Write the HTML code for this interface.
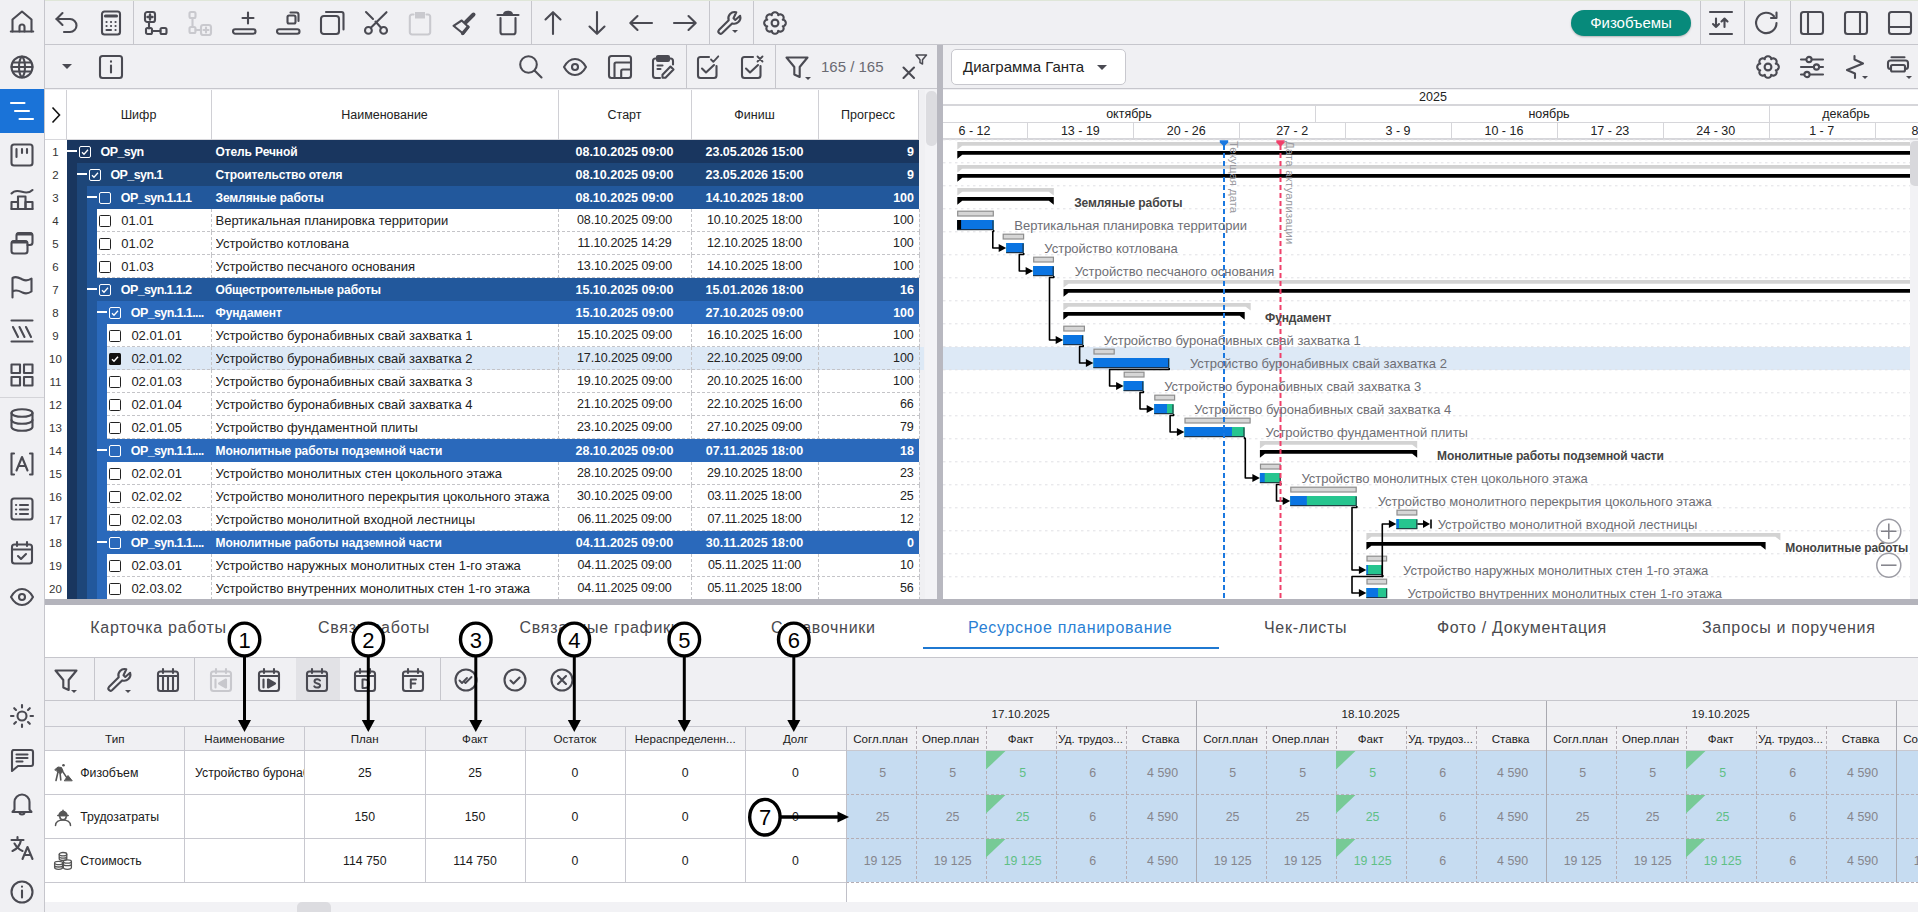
<!DOCTYPE html><html><head><meta charset="utf-8"><style>
html,body{margin:0;padding:0;}
body{width:1918px;height:912px;overflow:hidden;position:relative;background:#f0f0f3;font-family:"Liberation Sans",sans-serif;color:#222;}
div{box-sizing:border-box;}
</style></head><body>
<div style="position:absolute;left:0px;top:0px;width:1918px;height:1px;background:#dfe6d8"></div>
<div style="position:absolute;left:0px;top:0px;width:44px;height:912px;background:#f0f0f3"></div>
<div style="position:absolute;left:44px;top:0px;width:1px;height:912px;background:#c6c6cc"></div>
<div style="position:absolute;left:0px;top:89px;width:44px;height:44px;background:#1a73d8"></div>
<div style="position:absolute;left:0px;top:397px;width:44px;height:1px;background:#d4d4d8"></div>
<svg style="position:absolute;left:10.0px;top:10.0px;overflow:visible" width="24" height="24" viewBox="0 0 24 24" fill="none" stroke="#4a4a52" stroke-width="2.1" stroke-linecap="round" stroke-linejoin="round" color="#4a4a52"><path d="M0.8 21.5h22.4"/><path d="M2.5 21.5V9.5L12 1.5l9.5 8v12"/><path d="M9.5 21.5v-4.5a2.5 2.5 0 0 1 5 0v4.5"/></svg>
<svg style="position:absolute;left:10.0px;top:54.5px;overflow:visible" width="24" height="24" viewBox="0 0 24 24" fill="none" stroke="#4a4a52" stroke-width="2.1" stroke-linecap="round" stroke-linejoin="round" color="#4a4a52"><circle cx="12" cy="12" r="10.5"/><path d="M1.5 12h21M3 7.5h18M3 16.5h18"/><path d="M12 1.5c-4 4-4 17 0 21M12 1.5c4 4 4 17 0 21"/></svg>
<svg style="position:absolute;left:10.0px;top:99.0px;overflow:visible" width="24" height="24" viewBox="0 0 24 24" fill="none" stroke="#ffffff" stroke-width="2.1" stroke-linecap="round" stroke-linejoin="round" color="#ffffff"><path d="M1 4h13.5M5 12h14M9.5 20h13.5"/></svg>
<svg style="position:absolute;left:10.0px;top:143.0px;overflow:visible" width="24" height="24" viewBox="0 0 24 24" fill="none" stroke="#4a4a52" stroke-width="2.1" stroke-linecap="round" stroke-linejoin="round" color="#4a4a52"><rect x="1.5" y="1.5" width="21" height="21" rx="2.5"/><path d="M6.5 6v8M12 6v4M17 6v4"/></svg>
<svg style="position:absolute;left:10.0px;top:187.0px;overflow:visible" width="24" height="24" viewBox="0 0 24 24" fill="none" stroke="#4a4a52" stroke-width="2.1" stroke-linecap="round" stroke-linejoin="round" color="#4a4a52"><path d="M1.5 22h21"/><rect x="1.5" y="15" width="6.5" height="7"/><rect x="8" y="9.5" width="7.5" height="12.5"/><rect x="15.5" y="15" width="7" height="7"/><path d="M1.5 6.5C4 3.5 8 3.5 12 4.8S19 6.5 22.5 3"/></svg>
<svg style="position:absolute;left:10.0px;top:231.0px;overflow:visible" width="24" height="24" viewBox="0 0 24 24" fill="none" stroke="#4a4a52" stroke-width="2.1" stroke-linecap="round" stroke-linejoin="round" color="#4a4a52"><rect x="1.5" y="10" width="16" height="12.5" rx="2.5"/><path d="M6.5 10V4.5a2.5 2.5 0 0 1 2.5-2.5h11a2.5 2.5 0 0 1 2.5 2.5v7a2.5 2.5 0 0 1-2.5 2.5h-2.5"/><path d="M7.5 3h14M2.5 11h14" stroke-width="3"/></svg>
<svg style="position:absolute;left:10.0px;top:275.0px;overflow:visible" width="24" height="24" viewBox="0 0 24 24" fill="none" stroke="#4a4a52" stroke-width="2.1" stroke-linecap="round" stroke-linejoin="round" color="#4a4a52"><path d="M2.5 22.5V3c4-2.5 7 0 10 1.5s6 1 9-1v13c-3 2-6 2.5-9 1S6.5 14 2.5 16.5"/></svg>
<svg style="position:absolute;left:10.0px;top:319.0px;overflow:visible" width="24" height="24" viewBox="0 0 24 24" fill="none" stroke="#4a4a52" stroke-width="2.1" stroke-linecap="round" stroke-linejoin="round" color="#4a4a52"><path d="M1.5 1.5h21M1.5 22.5h21M3 8l5 10M9.5 8l5 10M16 8l5 10"/></svg>
<svg style="position:absolute;left:10.0px;top:363.0px;overflow:visible" width="24" height="24" viewBox="0 0 24 24" fill="none" stroke="#4a4a52" stroke-width="2.1" stroke-linecap="round" stroke-linejoin="round" color="#4a4a52"><rect x="1.5" y="1.5" width="8.5" height="8.5"/><rect x="14" y="1.5" width="8.5" height="8.5"/><rect x="1.5" y="14" width="8.5" height="8.5"/><rect x="14" y="14" width="8.5" height="8.5"/></svg>
<svg style="position:absolute;left:10.0px;top:408.0px;overflow:visible" width="24" height="24" viewBox="0 0 24 24" fill="none" stroke="#4a4a52" stroke-width="2.1" stroke-linecap="round" stroke-linejoin="round" color="#4a4a52"><ellipse cx="12" cy="5" rx="10.5" ry="3.8"/><path d="M1.5 5v14c0 2.1 4.7 3.8 10.5 3.8s10.5-1.7 10.5-3.8V5"/><path d="M1.5 12c0 2.1 4.7 3.8 10.5 3.8s10.5-1.7 10.5-3.8"/></svg>
<svg style="position:absolute;left:10.0px;top:452.0px;overflow:visible" width="24" height="24" viewBox="0 0 24 24" fill="none" stroke="#4a4a52" stroke-width="2.1" stroke-linecap="round" stroke-linejoin="round" color="#4a4a52"><path d="M4 1.5H1.5v21H4M20 1.5h2.5v21H20"/><path d="M6.5 18.5L12 5l5.5 13.5M8.3 14h7.4"/></svg>
<svg style="position:absolute;left:10.0px;top:496.5px;overflow:visible" width="24" height="24" viewBox="0 0 24 24" fill="none" stroke="#4a4a52" stroke-width="2.1" stroke-linecap="round" stroke-linejoin="round" color="#4a4a52"><rect x="1.5" y="1.5" width="21" height="21" rx="2.5"/><path d="M6 8h.2M6 12.5h.2M6 17h.2M10 8h8M10 12.5h8M10 17h8"/></svg>
<svg style="position:absolute;left:10.0px;top:540.5px;overflow:visible" width="24" height="24" viewBox="0 0 24 24" fill="none" stroke="#4a4a52" stroke-width="2.1" stroke-linecap="round" stroke-linejoin="round" color="#4a4a52"><rect x="2" y="3.5" width="20" height="19" rx="2.5"/><path d="M2 8.5h20M7 1v4M17 1v4"/><path d="M8 15l3 3 5-5"/></svg>
<svg style="position:absolute;left:10.0px;top:584.5px;overflow:visible" width="24" height="24" viewBox="0 0 24 24" fill="none" stroke="#4a4a52" stroke-width="2.1" stroke-linecap="round" stroke-linejoin="round" color="#4a4a52"><path d="M1 12c3-5.5 7-8 11-8s8 2.5 11 8c-3 5.5-7 8-11 8s-8-2.5-11-8z"/><circle cx="12" cy="12" r="3"/></svg>
<svg style="position:absolute;left:10.0px;top:703.5px;overflow:visible" width="24" height="24" viewBox="0 0 24 24" fill="none" stroke="#4a4a52" stroke-width="2.1" stroke-linecap="round" stroke-linejoin="round" color="#4a4a52"><circle cx="12" cy="12" r="4.5"/><path d="M12 1v2.5M12 20.5V23M1 12h2.5M20.5 12H23M4.2 4.2l1.8 1.8M18 18l1.8 1.8M4.2 19.8L6 18M18 6l1.8-1.8"/></svg>
<svg style="position:absolute;left:10.0px;top:748.0px;overflow:visible" width="24" height="24" viewBox="0 0 24 24" fill="none" stroke="#4a4a52" stroke-width="2.1" stroke-linecap="round" stroke-linejoin="round" color="#4a4a52"><path d="M3 2h18a2 2 0 0 1 2 2v12a2 2 0 0 1-2 2H8l-6 5V4a2 2 0 0 1 2-2z"/><path d="M6.5 6.5h11M6.5 10h11M6.5 13.5h6"/></svg>
<svg style="position:absolute;left:10.0px;top:792.0px;overflow:visible" width="24" height="24" viewBox="0 0 24 24" fill="none" stroke="#4a4a52" stroke-width="2.1" stroke-linecap="round" stroke-linejoin="round" color="#4a4a52"><path d="M4.5 17.5V10a7.5 7.5 0 0 1 15 0v7.5l2 2.5H2.5z"/><path d="M9.5 20a2.5 2.5 0 0 0 5 0"/></svg>
<svg style="position:absolute;left:10.0px;top:836.0px;overflow:visible" width="24" height="24" viewBox="0 0 24 24" fill="none" stroke="#4a4a52" stroke-width="2.1" stroke-linecap="round" stroke-linejoin="round" color="#4a4a52"><path d="M1.5 4h12M7.5 1v3M11 4c-1 6-4 9-8.5 11M4.5 7.5c2 3.5 4.5 6 8 7.5"/><path d="M12.5 23l5-12 5 12M14.2 19h6.6"/></svg>
<svg style="position:absolute;left:10.0px;top:880.0px;overflow:visible" width="24" height="24" viewBox="0 0 24 24" fill="none" stroke="#4a4a52" stroke-width="2.1" stroke-linecap="round" stroke-linejoin="round" color="#4a4a52"><circle cx="12" cy="12" r="10.5"/><path d="M12 10.5v7M12 6.5v.3"/></svg>
<div style="position:absolute;left:45px;top:44px;width:1873px;height:1px;background:#c6c6cc"></div>
<div style="position:absolute;left:45px;top:88.3px;width:1873px;height:1.2px;background:#c6c6cc"></div>
<div style="position:absolute;left:133px;top:1px;width:1px;height:43px;background:#c6c6cc"></div>
<div style="position:absolute;left:531px;top:1px;width:1px;height:43px;background:#c6c6cc"></div>
<div style="position:absolute;left:708.5px;top:1px;width:1px;height:43px;background:#c6c6cc"></div>
<div style="position:absolute;left:753px;top:1px;width:1px;height:43px;background:#c6c6cc"></div>
<div style="position:absolute;left:1699.5px;top:1px;width:1px;height:43px;background:#c6c6cc"></div>
<div style="position:absolute;left:1744.4px;top:1px;width:1px;height:43px;background:#c6c6cc"></div>
<div style="position:absolute;left:1789.5px;top:1px;width:1px;height:43px;background:#c6c6cc"></div>
<svg style="position:absolute;left:55.0px;top:11.0px;overflow:visible" width="24" height="24" viewBox="0 0 24 24" fill="none" stroke="#4a4a52" stroke-width="2.1" stroke-linecap="round" stroke-linejoin="round" color="#4a4a52"><path d="M7.5 2L1.5 8l6 6"/><path d="M1.5 8H15a6.5 6.5 0 0 1 0 13H9"/></svg>
<svg style="position:absolute;left:99.0px;top:11.0px;overflow:visible" width="24" height="24" viewBox="0 0 24 24" fill="none" stroke="#4a4a52" stroke-width="2.1" stroke-linecap="round" stroke-linejoin="round" color="#4a4a52"><rect x="3" y="0.5" width="18" height="23" rx="2.5"/><path d="M6.5 5h11" stroke-width="3.2"/><path d="M7.5 11h.1M12 11h.1M16.5 11h.1M7.5 15h.1M12 15h.1M16.5 15h.1M7.5 19h4.5M16.5 19h.1"/></svg>
<svg style="position:absolute;left:144.0px;top:11.0px;overflow:visible" width="24" height="24" viewBox="0 0 24 24" fill="none" stroke="#4a4a52" stroke-width="2.1" stroke-linecap="round" stroke-linejoin="round" color="#4a4a52"><rect x="1" y="1" width="10" height="10" rx="2.3"/><path d="M6 3.5v5M3.5 6h5" stroke-width="2.4"/><path d="M5 11v6.5"/><rect x="2" y="17" width="6" height="6" rx="1.5"/><rect x="16.5" y="17" width="6" height="6" rx="1.5"/><path d="M8 20h8.5"/></svg>
<svg style="position:absolute;left:188.0px;top:11.0px;overflow:visible" width="24" height="24" viewBox="0 0 24 24" fill="none" stroke="#c9c9ce" stroke-width="2.1" stroke-linecap="round" stroke-linejoin="round" color="#c9c9ce"><rect x="1.5" y="1" width="6" height="6" rx="1.5"/><path d="M4.5 7v9"/><rect x="1.5" y="16" width="6" height="6" rx="1.5"/><path d="M7.5 19h5.5"/><rect x="13" y="14" width="10" height="10" rx="2.3"/><path d="M18 16.5v5M15.5 19h5"/></svg>
<svg style="position:absolute;left:232.0px;top:11.0px;overflow:visible" width="24" height="24" viewBox="0 0 24 24" fill="none" stroke="#4a4a52" stroke-width="2.1" stroke-linecap="round" stroke-linejoin="round" color="#4a4a52"><rect x="1" y="18.2" width="22.5" height="4.5" rx="2.2"/><path d="M16 1.5v11M10.5 7h11"/></svg>
<svg style="position:absolute;left:276.0px;top:11.0px;overflow:visible" width="24" height="24" viewBox="0 0 24 24" fill="none" stroke="#4a4a52" stroke-width="2.1" stroke-linecap="round" stroke-linejoin="round" color="#4a4a52"><rect x="1" y="18.2" width="22.5" height="4.5" rx="2.2"/><rect x="11.5" y="4.5" width="8" height="8" rx="1.5"/><path d="M14.5 1.5h6a2 2 0 0 1 2 2v6.5"/></svg>
<svg style="position:absolute;left:320.0px;top:11.0px;overflow:visible" width="24" height="24" viewBox="0 0 24 24" fill="none" stroke="#4a4a52" stroke-width="2.1" stroke-linecap="round" stroke-linejoin="round" color="#4a4a52"><rect x="1" y="5" width="18" height="18" rx="2.8"/><path d="M6 1h15.5a2 2 0 0 1 2 2v15.5"/></svg>
<svg style="position:absolute;left:364.0px;top:11.0px;overflow:visible" width="24" height="24" viewBox="0 0 24 24" fill="none" stroke="#4a4a52" stroke-width="2.1" stroke-linecap="round" stroke-linejoin="round" color="#4a4a52"><circle cx="4.4" cy="19.4" r="3.4"/><circle cx="19.6" cy="19.4" r="3.4"/><path d="M2 1l7 7M11.5 10.5l5.8 6.5M22.5 1.2L6.8 16.8"/></svg>
<svg style="position:absolute;left:408.0px;top:11.0px;overflow:visible" width="24" height="24" viewBox="0 0 24 24" fill="none" stroke="#c9c9ce" stroke-width="2.1" stroke-linecap="round" stroke-linejoin="round" color="#c9c9ce"><path d="M5.5 3.5H4a2.2 2.2 0 0 0-2.2 2.2v15.6A2.2 2.2 0 0 0 4 23.5h16a2.2 2.2 0 0 0 2.2-2.2V5.7A2.2 2.2 0 0 0 20 3.5h-1.5"/><rect x="7" y="1" width="10" height="6.5" fill="#c9c9ce" stroke="none"/></svg>
<svg style="position:absolute;left:452.0px;top:11.0px;overflow:visible" width="24" height="24" viewBox="0 0 24 24" fill="none" stroke="#4a4a52" stroke-width="2.1" stroke-linecap="round" stroke-linejoin="round" color="#4a4a52"><path d="M1.5 14.8l8.2-5.3 6.8 6.5-5.2 6.8z"/><path d="M10.5 22.5l5.5-6.5" stroke-width="3.2"/><path d="M14 11l7.5-7.5" stroke-width="4"/></svg>
<svg style="position:absolute;left:496.0px;top:11.0px;overflow:visible" width="24" height="24" viewBox="0 0 24 24" fill="none" stroke="#4a4a52" stroke-width="2.1" stroke-linecap="round" stroke-linejoin="round" color="#4a4a52"><path d="M1.5 4h21"/><path d="M8 3.5c0-2 1.5-2.8 4-2.8s4 .8 4 2.8z" fill="#4a4a52"/><path d="M4.5 7v14a2.3 2.3 0 0 0 2.3 2.3h10.4a2.3 2.3 0 0 0 2.3-2.3V7"/></svg>
<svg style="position:absolute;left:541.0px;top:11.0px;overflow:visible" width="24" height="24" viewBox="0 0 24 24" fill="none" stroke="#4a4a52" stroke-width="2.1" stroke-linecap="round" stroke-linejoin="round" color="#4a4a52"><path d="M12 1.5v21.5M4.5 8.5L12 1.2l7.5 7.3"/></svg>
<svg style="position:absolute;left:585.0px;top:11.0px;overflow:visible" width="24" height="24" viewBox="0 0 24 24" fill="none" stroke="#4a4a52" stroke-width="2.1" stroke-linecap="round" stroke-linejoin="round" color="#4a4a52"><path d="M12 1v21.5M4.5 15.5l7.5 7.3 7.5-7.3"/></svg>
<svg style="position:absolute;left:629.0px;top:11.0px;overflow:visible" width="24" height="24" viewBox="0 0 24 24" fill="none" stroke="#4a4a52" stroke-width="2.1" stroke-linecap="round" stroke-linejoin="round" color="#4a4a52"><path d="M1.5 12H23M8.5 5L1.3 12l7.2 7"/></svg>
<svg style="position:absolute;left:673.0px;top:11.0px;overflow:visible" width="24" height="24" viewBox="0 0 24 24" fill="none" stroke="#4a4a52" stroke-width="2.1" stroke-linecap="round" stroke-linejoin="round" color="#4a4a52"><path d="M1 12h21.5M15.5 5l7.2 7-7.2 7"/></svg>
<svg style="position:absolute;left:718.0px;top:11.0px;overflow:visible" width="24" height="24" viewBox="0 0 24 24" fill="none" stroke="#4a4a52" stroke-width="2.1" stroke-linecap="round" stroke-linejoin="round" color="#4a4a52"><path d="M15.5 7.2l1.8 1.8 4.8-4.2a6.2 6.2 0 0 1-8 7.6L4 22.2a2.2 2.2 0 0 1-3.1-3.1L10.7 9.3a6.2 6.2 0 0 1 7.6-8z"/></svg>
<svg style="position:absolute;left:763.0px;top:11.0px;overflow:visible" width="24" height="24" viewBox="0 0 24 24" fill="none" stroke="#4a4a52" stroke-width="2.1" stroke-linecap="round" stroke-linejoin="round" color="#4a4a52"><polygon points="22.80,12.00 22.77,12.42 22.70,12.84 22.57,13.25 22.38,13.64 22.15,14.02 21.86,14.37 21.52,14.69 21.12,14.96 20.62,15.18 19.76,15.21 20.34,15.85 20.54,16.35 20.63,16.83 20.65,17.30 20.61,17.75 20.51,18.18 20.36,18.59 20.16,18.97 19.92,19.32 19.64,19.64 19.32,19.92 18.97,20.16 18.59,20.36 18.18,20.51 17.75,20.61 17.30,20.65 16.83,20.63 16.35,20.54 15.85,20.34 15.21,19.76 15.18,20.62 14.96,21.12 14.69,21.52 14.37,21.86 14.02,22.15 13.64,22.38 13.25,22.57 12.84,22.70 12.42,22.77 12.00,22.80 11.58,22.77 11.16,22.70 10.75,22.57 10.36,22.38 9.98,22.15 9.63,21.86 9.31,21.52 9.04,21.12 8.82,20.62 8.79,19.76 8.15,20.34 7.65,20.54 7.17,20.63 6.70,20.65 6.25,20.61 5.82,20.51 5.41,20.36 5.03,20.16 4.68,19.92 4.36,19.64 4.08,19.32 3.84,18.97 3.64,18.59 3.49,18.18 3.39,17.75 3.35,17.30 3.37,16.83 3.46,16.35 3.66,15.85 4.24,15.21 3.38,15.18 2.88,14.96 2.48,14.69 2.14,14.37 1.85,14.02 1.62,13.64 1.43,13.25 1.30,12.84 1.23,12.42 1.20,12.00 1.23,11.58 1.30,11.16 1.43,10.75 1.62,10.36 1.85,9.98 2.14,9.63 2.48,9.31 2.88,9.04 3.38,8.82 4.24,8.79 3.66,8.15 3.46,7.65 3.37,7.17 3.35,6.70 3.39,6.25 3.49,5.82 3.64,5.41 3.84,5.03 4.08,4.68 4.36,4.36 4.68,4.08 5.03,3.84 5.41,3.64 5.82,3.49 6.25,3.39 6.70,3.35 7.17,3.37 7.65,3.46 8.15,3.66 8.79,4.24 8.82,3.38 9.04,2.88 9.31,2.48 9.63,2.14 9.98,1.85 10.36,1.62 10.75,1.43 11.16,1.30 11.58,1.23 12.00,1.20 12.42,1.23 12.84,1.30 13.25,1.43 13.64,1.62 14.02,1.85 14.37,2.14 14.69,2.48 14.96,2.88 15.18,3.38 15.21,4.24 15.85,3.66 16.35,3.46 16.83,3.37 17.30,3.35 17.75,3.39 18.18,3.49 18.59,3.64 18.97,3.84 19.32,4.08 19.64,4.36 19.92,4.68 20.16,5.03 20.36,5.41 20.51,5.82 20.61,6.25 20.65,6.70 20.63,7.17 20.54,7.65 20.34,8.15 19.76,8.79 20.62,8.82 21.12,9.04 21.52,9.31 21.86,9.63 22.15,9.98 22.38,10.36 22.57,10.75 22.70,11.16 22.77,11.58"/><circle cx="12" cy="12" r="3.4"/></svg>
<div style="position:absolute;left:732px;top:30px;width:0;height:0;border-left:3.0px solid transparent;border-right:3.0px solid transparent;border-top:3.0px solid #4a4a52"></div>
<div style="position:absolute;left:1571px;top:10px;width:120px;height:26px;border-radius:13px;background:#078a7b;box-shadow:0 1px 2px rgba(0,0,0,.25);color:#fff;font-size:15px;line-height:26px;text-align:center">Физобъемы</div>
<svg style="position:absolute;left:1709.0px;top:11.0px;overflow:visible" width="24" height="24" viewBox="0 0 24 24" fill="none" stroke="#4a4a52" stroke-width="2.1" stroke-linecap="round" stroke-linejoin="round" color="#4a4a52"><path d="M1 1h22M1 23h22"/><path d="M7 7.5v8.5M4 13l3 3 3-3M15.5 16V7.5M12.5 10.5l3-3 3 3"/></svg>
<svg style="position:absolute;left:1755.0px;top:11.0px;overflow:visible" width="24" height="24" viewBox="0 0 24 24" fill="none" stroke="#4a4a52" stroke-width="2.1" stroke-linecap="round" stroke-linejoin="round" color="#4a4a52"><path d="M21.5 12A10.2 10.2 0 1 1 19 5.2"/><path d="M21.5 1.5v5.5H16"/></svg>
<svg style="position:absolute;left:1800.0px;top:11.0px;overflow:visible" width="24" height="24" viewBox="0 0 24 24" fill="none" stroke="#4a4a52" stroke-width="2.1" stroke-linecap="round" stroke-linejoin="round" color="#4a4a52"><rect x="1" y="1" width="22" height="22" rx="2.5"/><path d="M8 1v22"/></svg>
<svg style="position:absolute;left:1844.0px;top:11.0px;overflow:visible" width="24" height="24" viewBox="0 0 24 24" fill="none" stroke="#4a4a52" stroke-width="2.1" stroke-linecap="round" stroke-linejoin="round" color="#4a4a52"><rect x="1" y="1" width="22" height="22" rx="2.5"/><path d="M16 1v22"/></svg>
<svg style="position:absolute;left:1888.0px;top:11.0px;overflow:visible" width="24" height="24" viewBox="0 0 24 24" fill="none" stroke="#4a4a52" stroke-width="2.1" stroke-linecap="round" stroke-linejoin="round" color="#4a4a52"><rect x="1" y="1" width="22" height="22" rx="2.5"/><path d="M1 16h22"/></svg>
<div style="position:absolute;left:62px;top:64px;width:0;height:0;border-left:5.0px solid transparent;border-right:5.0px solid transparent;border-top:5.0px solid #4a4a52"></div>
<svg style="position:absolute;left:99.0px;top:55.0px;overflow:visible" width="24" height="24" viewBox="0 0 24 24" fill="none" stroke="#4a4a52" stroke-width="2.1" stroke-linecap="round" stroke-linejoin="round" color="#4a4a52"><rect x="1" y="1" width="22" height="22" rx="2.5"/><path d="M12 10.5v7M12 6.3v.4"/></svg>
<div style="position:absolute;left:686px;top:45px;width:1px;height:44px;background:#c6c6cc"></div>
<div style="position:absolute;left:775px;top:45px;width:1px;height:44px;background:#c6c6cc"></div>
<svg style="position:absolute;left:519.0px;top:55.0px;overflow:visible" width="24" height="24" viewBox="0 0 24 24" fill="none" stroke="#4a4a52" stroke-width="2.1" stroke-linecap="round" stroke-linejoin="round" color="#4a4a52"><circle cx="9.5" cy="9.5" r="8.3"/><path d="M15.5 15.5l7 7"/></svg>
<svg style="position:absolute;left:563.0px;top:55.0px;overflow:visible" width="24" height="24" viewBox="0 0 24 24" fill="none" stroke="#4a4a52" stroke-width="2.1" stroke-linecap="round" stroke-linejoin="round" color="#4a4a52"><path d="M1 12c3-5.5 7-8 11-8s8 2.5 11 8c-3 5.5-7 8-11 8s-8-2.5-11-8z"/><circle cx="12" cy="12" r="3"/></svg>
<svg style="position:absolute;left:608.0px;top:55.0px;overflow:visible" width="24" height="24" viewBox="0 0 24 24" fill="none" stroke="#4a4a52" stroke-width="2.1" stroke-linecap="round" stroke-linejoin="round" color="#4a4a52"><rect x="1" y="1" width="22" height="22" rx="2.5"/><path d="M6.5 23V9a1.5 1.5 0 0 1 1.5-1.5h15M13.2 23v-7a1.5 1.5 0 0 1 1.5-1.5H23"/></svg>
<svg style="position:absolute;left:651.0px;top:55.0px;overflow:visible" width="24" height="24" viewBox="0 0 24 24" fill="none" stroke="#4a4a52" stroke-width="2.1" stroke-linecap="round" stroke-linejoin="round" color="#4a4a52"><path d="M6 3.5H4.5a2.5 2.5 0 0 0-2.5 2.5v14.5a2.5 2.5 0 0 0 2.5 2.5H9M18 3.5h1.5a2.5 2.5 0 0 1 2.5 2.5v3.5"/><rect x="6" y="1" width="12" height="5" rx="1" fill="#4a4a52"/><path d="M6.5 10.5h5M6.5 14h3"/><path d="M19.5 11.5l3 3-8 8.3h-3v-3z"/></svg>
<svg style="position:absolute;left:696.0px;top:55.0px;overflow:visible" width="24" height="24" viewBox="0 0 24 24" fill="none" stroke="#4a4a52" stroke-width="2.1" stroke-linecap="round" stroke-linejoin="round" color="#4a4a52"><path d="M13 2H4.5A2.5 2.5 0 0 0 2 4.5v16A2.5 2.5 0 0 0 4.5 23h13.5a2.5 2.5 0 0 0 2.5-2.5V11"/><path d="M6 13.5l4 4 8-7.5"/><path d="M15 4.5l2.3 2.3 5-5.5" stroke-width="1.8"/></svg>
<svg style="position:absolute;left:740.0px;top:55.0px;overflow:visible" width="24" height="24" viewBox="0 0 24 24" fill="none" stroke="#4a4a52" stroke-width="2.1" stroke-linecap="round" stroke-linejoin="round" color="#4a4a52"><path d="M13 2H4.5A2.5 2.5 0 0 0 2 4.5v16A2.5 2.5 0 0 0 4.5 23h13.5a2.5 2.5 0 0 0 2.5-2.5V11"/><path d="M6 13.5l4 4 8-7.5"/><path d="M17.5 1.5l5 5M22.5 1.5l-5 5" stroke-width="1.8"/></svg>
<svg style="position:absolute;left:785.0px;top:55.0px;overflow:visible" width="24" height="24" viewBox="0 0 24 24" fill="none" stroke="#4a4a52" stroke-width="2.1" stroke-linecap="round" stroke-linejoin="round" color="#4a4a52"><path d="M1.5 2.5h21l-7.8 9.5v10l-5.4-2.5V12z"/></svg>
<div style="position:absolute;left:805px;top:77px;width:0;height:0;border-left:3.0px solid transparent;border-right:3.0px solid transparent;border-top:3.0px solid #4a4a52"></div>
<div style="position:absolute;left:821px;top:58px;white-space:nowrap;font-size:15px;color:#6a6a72;line-height:18px">165 / 165</div>
<svg style="position:absolute;left:0;top:0;overflow:visible" width="1" height="1" fill="none" stroke="#4a4a52" stroke-width="2.1" stroke-linecap="round" stroke-linejoin="round"><path d="M903.5 67.5l10.5 10.5M914 67.5l-10.5 10.5"/><path d="M916 55h10.5l-4 4.8v4.2l-2.5-1.3v-2.9z" stroke-width="1.5"/></svg>
<div style="position:absolute;left:937px;top:45px;width:6px;height:555px;background:#b8b8c0"></div>
<div style="position:absolute;left:951px;top:49px;width:175px;height:36px;border:1px solid #c8c8ce;border-radius:5px;background:#fff"></div>
<div style="position:absolute;left:963px;top:58px;white-space:nowrap;font-size:15px;color:#222;line-height:18px">Диаграмма Ганта</div>
<div style="position:absolute;left:1097px;top:64.5px;width:0;height:0;border-left:5.0px solid transparent;border-right:5.0px solid transparent;border-top:5.0px solid #4a4a52"></div>
<svg style="position:absolute;left:1756.0px;top:55.0px;overflow:visible" width="24" height="24" viewBox="0 0 24 24" fill="none" stroke="#4a4a52" stroke-width="2.1" stroke-linecap="round" stroke-linejoin="round" color="#4a4a52"><polygon points="22.80,12.00 22.77,12.42 22.70,12.84 22.57,13.25 22.38,13.64 22.15,14.02 21.86,14.37 21.52,14.69 21.12,14.96 20.62,15.18 19.76,15.21 20.34,15.85 20.54,16.35 20.63,16.83 20.65,17.30 20.61,17.75 20.51,18.18 20.36,18.59 20.16,18.97 19.92,19.32 19.64,19.64 19.32,19.92 18.97,20.16 18.59,20.36 18.18,20.51 17.75,20.61 17.30,20.65 16.83,20.63 16.35,20.54 15.85,20.34 15.21,19.76 15.18,20.62 14.96,21.12 14.69,21.52 14.37,21.86 14.02,22.15 13.64,22.38 13.25,22.57 12.84,22.70 12.42,22.77 12.00,22.80 11.58,22.77 11.16,22.70 10.75,22.57 10.36,22.38 9.98,22.15 9.63,21.86 9.31,21.52 9.04,21.12 8.82,20.62 8.79,19.76 8.15,20.34 7.65,20.54 7.17,20.63 6.70,20.65 6.25,20.61 5.82,20.51 5.41,20.36 5.03,20.16 4.68,19.92 4.36,19.64 4.08,19.32 3.84,18.97 3.64,18.59 3.49,18.18 3.39,17.75 3.35,17.30 3.37,16.83 3.46,16.35 3.66,15.85 4.24,15.21 3.38,15.18 2.88,14.96 2.48,14.69 2.14,14.37 1.85,14.02 1.62,13.64 1.43,13.25 1.30,12.84 1.23,12.42 1.20,12.00 1.23,11.58 1.30,11.16 1.43,10.75 1.62,10.36 1.85,9.98 2.14,9.63 2.48,9.31 2.88,9.04 3.38,8.82 4.24,8.79 3.66,8.15 3.46,7.65 3.37,7.17 3.35,6.70 3.39,6.25 3.49,5.82 3.64,5.41 3.84,5.03 4.08,4.68 4.36,4.36 4.68,4.08 5.03,3.84 5.41,3.64 5.82,3.49 6.25,3.39 6.70,3.35 7.17,3.37 7.65,3.46 8.15,3.66 8.79,4.24 8.82,3.38 9.04,2.88 9.31,2.48 9.63,2.14 9.98,1.85 10.36,1.62 10.75,1.43 11.16,1.30 11.58,1.23 12.00,1.20 12.42,1.23 12.84,1.30 13.25,1.43 13.64,1.62 14.02,1.85 14.37,2.14 14.69,2.48 14.96,2.88 15.18,3.38 15.21,4.24 15.85,3.66 16.35,3.46 16.83,3.37 17.30,3.35 17.75,3.39 18.18,3.49 18.59,3.64 18.97,3.84 19.32,4.08 19.64,4.36 19.92,4.68 20.16,5.03 20.36,5.41 20.51,5.82 20.61,6.25 20.65,6.70 20.63,7.17 20.54,7.65 20.34,8.15 19.76,8.79 20.62,8.82 21.12,9.04 21.52,9.31 21.86,9.63 22.15,9.98 22.38,10.36 22.57,10.75 22.70,11.16 22.77,11.58"/><circle cx="12" cy="12" r="3.4"/></svg>
<svg style="position:absolute;left:1800.0px;top:55.0px;overflow:visible" width="24" height="24" viewBox="0 0 24 24" fill="none" stroke="#4a4a52" stroke-width="2.1" stroke-linecap="round" stroke-linejoin="round" color="#4a4a52"><path d="M1 4.5h22M1 12h22M1 19.5h22"/><circle cx="9" cy="4.5" r="2.6" fill="#f0f0f3"/><circle cx="16.5" cy="12" r="2.6" fill="#f0f0f3"/><circle cx="7" cy="19.5" r="2.6" fill="#f0f0f3"/></svg>
<svg style="position:absolute;left:1842.5px;top:55.0px;overflow:visible" width="24" height="24" viewBox="0 0 24 24" fill="none" stroke="#4a4a52" stroke-width="2.1" stroke-linecap="round" stroke-linejoin="round" color="#4a4a52"><path d="M11.5 1v3.5l8.5 4-16 6.5 8 3.5v4.5"/></svg>
<svg style="position:absolute;left:1886.0px;top:55.0px;overflow:visible" width="24" height="24" viewBox="0 0 24 24" fill="none" stroke="#4a4a52" stroke-width="2.1" stroke-linecap="round" stroke-linejoin="round" color="#4a4a52"><path d="M5.5 2.3h13"/><rect x="2" y="5.5" width="20" height="8.5" rx="2.5"/><rect x="5" y="10" width="14" height="6.5" rx="1.5" fill="#f0f0f3"/></svg>
<div style="position:absolute;left:1861.5px;top:75.5px;width:0;height:0;border-left:3.5px solid transparent;border-right:3.5px solid transparent;border-top:3.5px solid #4a4a52"></div>
<div style="position:absolute;left:1905.5px;top:75.5px;width:0;height:0;border-left:3.5px solid transparent;border-right:3.5px solid transparent;border-top:3.5px solid #4a4a52"></div>
<div style="position:absolute;left:45px;top:89.5px;width:874px;height:50.5px;background:#fff"></div>
<div style="position:absolute;left:925px;top:90px;width:12px;height:510px;background:#f3f3f6"></div>
<div style="position:absolute;left:925.5px;top:91px;width:11px;height:55px;border-radius:5px;background:#dcdce0"></div>
<div style="position:absolute;left:45px;top:139px;width:874px;height:1px;background:#d8d8dc"></div>
<div style="position:absolute;left:66px;top:89.5px;width:1px;height:50.5px;background:#d0d0d5"></div>
<div style="position:absolute;left:211px;top:89.5px;width:1px;height:50.5px;background:#d0d0d5"></div>
<div style="position:absolute;left:558px;top:89.5px;width:1px;height:50.5px;background:#d0d0d5"></div>
<div style="position:absolute;left:691px;top:89.5px;width:1px;height:50.5px;background:#d0d0d5"></div>
<div style="position:absolute;left:818px;top:89.5px;width:1px;height:50.5px;background:#d0d0d5"></div>
<div style="position:absolute;left:918px;top:89.5px;width:1px;height:50.5px;background:#d0d0d5"></div>
<svg style="position:absolute;left:49px;top:105px" width="14" height="20" viewBox="0 0 14 20" fill="none" stroke="#111" stroke-width="1.6"><path d="M3.5 2.5l7 7.5-7 7.5"/></svg>
<div style="position:absolute;left:66px;top:90px;width:145px;white-space:nowrap;font-size:12.5px;color:#222;text-align:center;line-height:50px">Шифр</div>
<div style="position:absolute;left:211px;top:90px;width:347px;white-space:nowrap;font-size:12.5px;color:#222;text-align:center;line-height:50px">Наименование</div>
<div style="position:absolute;left:558px;top:90px;width:133px;white-space:nowrap;font-size:12.5px;color:#222;text-align:center;line-height:50px">Старт</div>
<div style="position:absolute;left:691px;top:90px;width:127px;white-space:nowrap;font-size:12.5px;color:#222;text-align:center;line-height:50px">Финиш</div>
<div style="position:absolute;left:818px;top:90px;width:100px;white-space:nowrap;font-size:12.5px;color:#222;text-align:center;line-height:50px">Прогресс</div>
<div style="position:absolute;left:45px;top:140px;width:874px;height:460px;background:#fff"></div>
<div style="position:absolute;left:45px;top:141px;width:21px;white-space:nowrap;font-size:11.5px;color:#333;text-align:center;line-height:23px">1</div>
<div style="position:absolute;left:66.6px;top:140px;width:852.1999999999999px;height:23px;background:#19365f"></div>
<div style="position:absolute;left:67.1px;top:149.8px;width:9.5px;height:1.8px;background:#fff"></div>
<div style="position:absolute;left:78.6px;top:145.5px;width:12px;height:12px;border:1.5px solid #fff;border-radius:2px"></div>
<svg style="position:absolute;left:78.6px;top:145.5px" width="12" height="12" viewBox="0 0 12 12" fill="none" stroke="#fff" stroke-width="1.3"><path d="M3 6.2l2 2 4-4.4"/></svg>
<div style="position:absolute;left:100.6px;top:140.5px;white-space:nowrap;font-size:12.5px;font-weight:bold;color:#fff;line-height:23px;letter-spacing:-0.6px">OP_syn</div>
<div style="position:absolute;left:215.5px;top:140.5px;white-space:nowrap;font-size:12.5px;font-weight:bold;color:#fff;line-height:23px;font-size:12px;letter-spacing:-0.1px">Отель Речной</div>
<div style="position:absolute;left:558px;top:140.5px;width:133px;white-space:nowrap;font-size:12.5px;font-weight:bold;color:#fff;line-height:23px;text-align:center">08.10.2025 09:00</div>
<div style="position:absolute;left:691px;top:140.5px;width:127px;white-space:nowrap;font-size:12.5px;font-weight:bold;color:#fff;line-height:23px;text-align:center">23.05.2026 15:00</div>
<div style="position:absolute;left:818px;top:140.5px;width:96px;white-space:nowrap;font-size:12.5px;font-weight:bold;color:#fff;line-height:23px;text-align:right">9</div>
<div style="position:absolute;left:45px;top:164px;width:21px;white-space:nowrap;font-size:11.5px;color:#333;text-align:center;line-height:23px">2</div>
<div style="position:absolute;left:66.6px;top:163px;width:10.200000000000006px;height:23px;background:#19365f"></div>
<div style="position:absolute;left:76.5px;top:163px;width:842.3px;height:23px;background:#1d4679"></div>
<div style="position:absolute;left:77.0px;top:172.8px;width:9.5px;height:1.8px;background:#fff"></div>
<div style="position:absolute;left:88.5px;top:168.5px;width:12px;height:12px;border:1.5px solid #fff;border-radius:2px"></div>
<svg style="position:absolute;left:88.5px;top:168.5px" width="12" height="12" viewBox="0 0 12 12" fill="none" stroke="#fff" stroke-width="1.3"><path d="M3 6.2l2 2 4-4.4"/></svg>
<div style="position:absolute;left:110.5px;top:163.5px;white-space:nowrap;font-size:12.5px;font-weight:bold;color:#fff;line-height:23px;letter-spacing:-0.6px">OP_syn.1</div>
<div style="position:absolute;left:215.5px;top:163.5px;white-space:nowrap;font-size:12.5px;font-weight:bold;color:#fff;line-height:23px;font-size:12px;letter-spacing:-0.1px">Строительство отеля</div>
<div style="position:absolute;left:558px;top:163.5px;width:133px;white-space:nowrap;font-size:12.5px;font-weight:bold;color:#fff;line-height:23px;text-align:center">08.10.2025 09:00</div>
<div style="position:absolute;left:691px;top:163.5px;width:127px;white-space:nowrap;font-size:12.5px;font-weight:bold;color:#fff;line-height:23px;text-align:center">23.05.2026 15:00</div>
<div style="position:absolute;left:818px;top:163.5px;width:96px;white-space:nowrap;font-size:12.5px;font-weight:bold;color:#fff;line-height:23px;text-align:right">9</div>
<div style="position:absolute;left:45px;top:187px;width:21px;white-space:nowrap;font-size:11.5px;color:#333;text-align:center;line-height:23px">3</div>
<div style="position:absolute;left:66.6px;top:186px;width:10.200000000000006px;height:23px;background:#19365f"></div>
<div style="position:absolute;left:76.5px;top:186px;width:10.599999999999998px;height:23px;background:#1d4679"></div>
<div style="position:absolute;left:86.8px;top:186px;width:832.0px;height:23px;background:#22589c"></div>
<div style="position:absolute;left:87.3px;top:195.8px;width:9.5px;height:1.8px;background:#fff"></div>
<div style="position:absolute;left:98.8px;top:191.5px;width:12px;height:12px;border:1.5px solid #fff;border-radius:2px"></div>
<div style="position:absolute;left:120.8px;top:186.5px;white-space:nowrap;font-size:12.5px;font-weight:bold;color:#fff;line-height:23px;letter-spacing:-0.6px">OP_syn.1.1.1</div>
<div style="position:absolute;left:215.5px;top:186.5px;white-space:nowrap;font-size:12.5px;font-weight:bold;color:#fff;line-height:23px;font-size:12px;letter-spacing:-0.1px">Земляные работы</div>
<div style="position:absolute;left:558px;top:186.5px;width:133px;white-space:nowrap;font-size:12.5px;font-weight:bold;color:#fff;line-height:23px;text-align:center">08.10.2025 09:00</div>
<div style="position:absolute;left:691px;top:186.5px;width:127px;white-space:nowrap;font-size:12.5px;font-weight:bold;color:#fff;line-height:23px;text-align:center">14.10.2025 18:00</div>
<div style="position:absolute;left:818px;top:186.5px;width:96px;white-space:nowrap;font-size:12.5px;font-weight:bold;color:#fff;line-height:23px;text-align:right">100</div>
<div style="position:absolute;left:45px;top:210px;width:21px;white-space:nowrap;font-size:11.5px;color:#333;text-align:center;line-height:23px">4</div>
<div style="position:absolute;left:66.6px;top:209px;width:10.200000000000006px;height:23px;background:#19365f"></div>
<div style="position:absolute;left:76.5px;top:209px;width:10.599999999999998px;height:23px;background:#1d4679"></div>
<div style="position:absolute;left:86.8px;top:209px;width:10.3px;height:23px;background:#22589c"></div>
<div style="position:absolute;left:96.8px;top:209px;width:822.0px;height:23px;background:#fff"></div>
<div style="position:absolute;left:96.8px;top:231px;width:822.0px;height:1px;background:repeating-linear-gradient(90deg,#c4c4c8 0 3px,transparent 3px 5px)"></div>
<div style="position:absolute;left:211px;top:209px;width:1px;height:23px;background:repeating-linear-gradient(180deg,#c4c4c8 0 3px,transparent 3px 5px)"></div>
<div style="position:absolute;left:558px;top:209px;width:1px;height:23px;background:repeating-linear-gradient(180deg,#c4c4c8 0 3px,transparent 3px 5px)"></div>
<div style="position:absolute;left:691px;top:209px;width:1px;height:23px;background:repeating-linear-gradient(180deg,#c4c4c8 0 3px,transparent 3px 5px)"></div>
<div style="position:absolute;left:818px;top:209px;width:1px;height:23px;background:repeating-linear-gradient(180deg,#c4c4c8 0 3px,transparent 3px 5px)"></div>
<div style="position:absolute;left:918.5px;top:209px;width:1px;height:23px;background:repeating-linear-gradient(180deg,#c4c4c8 0 3px,transparent 3px 5px)"></div>
<div style="position:absolute;left:98.8px;top:214.5px;width:12px;height:12px;border:1.3px solid #222;border-radius:1.5px;background:#fff"></div>
<div style="position:absolute;left:121.3px;top:208.5px;white-space:nowrap;font-size:13px;color:#222;line-height:23px">01.01</div>
<div style="position:absolute;left:215.5px;top:208.5px;width:341px;white-space:nowrap;font-size:13px;color:#222;line-height:23px;overflow:hidden">Вертикальная планировка территории</div>
<div style="position:absolute;left:558px;top:208.5px;width:133px;white-space:nowrap;font-size:12.5px;color:#222;line-height:23px;letter-spacing:-0.15px;text-align:center">08.10.2025 09:00</div>
<div style="position:absolute;left:691px;top:208.5px;width:127px;white-space:nowrap;font-size:12.5px;color:#222;line-height:23px;letter-spacing:-0.15px;text-align:center">10.10.2025 18:00</div>
<div style="position:absolute;left:818px;top:208.5px;width:95.5px;white-space:nowrap;font-size:12.5px;color:#222;line-height:23px;letter-spacing:-0.15px;text-align:right">100</div>
<div style="position:absolute;left:45px;top:233px;width:21px;white-space:nowrap;font-size:11.5px;color:#333;text-align:center;line-height:23px">5</div>
<div style="position:absolute;left:66.6px;top:232px;width:10.200000000000006px;height:23px;background:#19365f"></div>
<div style="position:absolute;left:76.5px;top:232px;width:10.599999999999998px;height:23px;background:#1d4679"></div>
<div style="position:absolute;left:86.8px;top:232px;width:10.3px;height:23px;background:#22589c"></div>
<div style="position:absolute;left:96.8px;top:232px;width:822.0px;height:23px;background:#fff"></div>
<div style="position:absolute;left:96.8px;top:254px;width:822.0px;height:1px;background:repeating-linear-gradient(90deg,#c4c4c8 0 3px,transparent 3px 5px)"></div>
<div style="position:absolute;left:211px;top:232px;width:1px;height:23px;background:repeating-linear-gradient(180deg,#c4c4c8 0 3px,transparent 3px 5px)"></div>
<div style="position:absolute;left:558px;top:232px;width:1px;height:23px;background:repeating-linear-gradient(180deg,#c4c4c8 0 3px,transparent 3px 5px)"></div>
<div style="position:absolute;left:691px;top:232px;width:1px;height:23px;background:repeating-linear-gradient(180deg,#c4c4c8 0 3px,transparent 3px 5px)"></div>
<div style="position:absolute;left:818px;top:232px;width:1px;height:23px;background:repeating-linear-gradient(180deg,#c4c4c8 0 3px,transparent 3px 5px)"></div>
<div style="position:absolute;left:918.5px;top:232px;width:1px;height:23px;background:repeating-linear-gradient(180deg,#c4c4c8 0 3px,transparent 3px 5px)"></div>
<div style="position:absolute;left:98.8px;top:237.5px;width:12px;height:12px;border:1.3px solid #222;border-radius:1.5px;background:#fff"></div>
<div style="position:absolute;left:121.3px;top:231.5px;white-space:nowrap;font-size:13px;color:#222;line-height:23px">01.02</div>
<div style="position:absolute;left:215.5px;top:231.5px;width:341px;white-space:nowrap;font-size:13px;color:#222;line-height:23px;overflow:hidden">Устройство котлована</div>
<div style="position:absolute;left:558px;top:231.5px;width:133px;white-space:nowrap;font-size:12.5px;color:#222;line-height:23px;letter-spacing:-0.15px;text-align:center">11.10.2025 14:29</div>
<div style="position:absolute;left:691px;top:231.5px;width:127px;white-space:nowrap;font-size:12.5px;color:#222;line-height:23px;letter-spacing:-0.15px;text-align:center">12.10.2025 18:00</div>
<div style="position:absolute;left:818px;top:231.5px;width:95.5px;white-space:nowrap;font-size:12.5px;color:#222;line-height:23px;letter-spacing:-0.15px;text-align:right">100</div>
<div style="position:absolute;left:45px;top:256px;width:21px;white-space:nowrap;font-size:11.5px;color:#333;text-align:center;line-height:23px">6</div>
<div style="position:absolute;left:66.6px;top:255px;width:10.200000000000006px;height:23px;background:#19365f"></div>
<div style="position:absolute;left:76.5px;top:255px;width:10.599999999999998px;height:23px;background:#1d4679"></div>
<div style="position:absolute;left:86.8px;top:255px;width:10.3px;height:23px;background:#22589c"></div>
<div style="position:absolute;left:96.8px;top:255px;width:822.0px;height:23px;background:#fff"></div>
<div style="position:absolute;left:96.8px;top:277px;width:822.0px;height:1px;background:repeating-linear-gradient(90deg,#c4c4c8 0 3px,transparent 3px 5px)"></div>
<div style="position:absolute;left:211px;top:255px;width:1px;height:23px;background:repeating-linear-gradient(180deg,#c4c4c8 0 3px,transparent 3px 5px)"></div>
<div style="position:absolute;left:558px;top:255px;width:1px;height:23px;background:repeating-linear-gradient(180deg,#c4c4c8 0 3px,transparent 3px 5px)"></div>
<div style="position:absolute;left:691px;top:255px;width:1px;height:23px;background:repeating-linear-gradient(180deg,#c4c4c8 0 3px,transparent 3px 5px)"></div>
<div style="position:absolute;left:818px;top:255px;width:1px;height:23px;background:repeating-linear-gradient(180deg,#c4c4c8 0 3px,transparent 3px 5px)"></div>
<div style="position:absolute;left:918.5px;top:255px;width:1px;height:23px;background:repeating-linear-gradient(180deg,#c4c4c8 0 3px,transparent 3px 5px)"></div>
<div style="position:absolute;left:98.8px;top:260.5px;width:12px;height:12px;border:1.3px solid #222;border-radius:1.5px;background:#fff"></div>
<div style="position:absolute;left:121.3px;top:254.5px;white-space:nowrap;font-size:13px;color:#222;line-height:23px">01.03</div>
<div style="position:absolute;left:215.5px;top:254.5px;width:341px;white-space:nowrap;font-size:13px;color:#222;line-height:23px;overflow:hidden">Устройство песчаного основания</div>
<div style="position:absolute;left:558px;top:254.5px;width:133px;white-space:nowrap;font-size:12.5px;color:#222;line-height:23px;letter-spacing:-0.15px;text-align:center">13.10.2025 09:00</div>
<div style="position:absolute;left:691px;top:254.5px;width:127px;white-space:nowrap;font-size:12.5px;color:#222;line-height:23px;letter-spacing:-0.15px;text-align:center">14.10.2025 18:00</div>
<div style="position:absolute;left:818px;top:254.5px;width:95.5px;white-space:nowrap;font-size:12.5px;color:#222;line-height:23px;letter-spacing:-0.15px;text-align:right">100</div>
<div style="position:absolute;left:45px;top:279px;width:21px;white-space:nowrap;font-size:11.5px;color:#333;text-align:center;line-height:23px">7</div>
<div style="position:absolute;left:66.6px;top:278px;width:10.200000000000006px;height:23px;background:#19365f"></div>
<div style="position:absolute;left:76.5px;top:278px;width:10.599999999999998px;height:23px;background:#1d4679"></div>
<div style="position:absolute;left:86.8px;top:278px;width:832.0px;height:23px;background:#22589c"></div>
<div style="position:absolute;left:87.3px;top:287.8px;width:9.5px;height:1.8px;background:#fff"></div>
<div style="position:absolute;left:98.8px;top:283.5px;width:12px;height:12px;border:1.5px solid #fff;border-radius:2px"></div>
<svg style="position:absolute;left:98.8px;top:283.5px" width="12" height="12" viewBox="0 0 12 12" fill="none" stroke="#fff" stroke-width="1.3"><path d="M3 6.2l2 2 4-4.4"/></svg>
<div style="position:absolute;left:120.8px;top:278.5px;white-space:nowrap;font-size:12.5px;font-weight:bold;color:#fff;line-height:23px;letter-spacing:-0.6px">OP_syn.1.1.2</div>
<div style="position:absolute;left:215.5px;top:278.5px;white-space:nowrap;font-size:12.5px;font-weight:bold;color:#fff;line-height:23px;font-size:12px;letter-spacing:-0.1px">Общестроительные работы</div>
<div style="position:absolute;left:558px;top:278.5px;width:133px;white-space:nowrap;font-size:12.5px;font-weight:bold;color:#fff;line-height:23px;text-align:center">15.10.2025 09:00</div>
<div style="position:absolute;left:691px;top:278.5px;width:127px;white-space:nowrap;font-size:12.5px;font-weight:bold;color:#fff;line-height:23px;text-align:center">15.01.2026 18:00</div>
<div style="position:absolute;left:818px;top:278.5px;width:96px;white-space:nowrap;font-size:12.5px;font-weight:bold;color:#fff;line-height:23px;text-align:right">16</div>
<div style="position:absolute;left:45px;top:302px;width:21px;white-space:nowrap;font-size:11.5px;color:#333;text-align:center;line-height:23px">8</div>
<div style="position:absolute;left:66.6px;top:301px;width:10.200000000000006px;height:23px;background:#19365f"></div>
<div style="position:absolute;left:76.5px;top:301px;width:10.599999999999998px;height:23px;background:#1d4679"></div>
<div style="position:absolute;left:86.8px;top:301px;width:10.3px;height:23px;background:#22589c"></div>
<div style="position:absolute;left:96.8px;top:301px;width:822.0px;height:23px;background:#2a69bb"></div>
<div style="position:absolute;left:97.3px;top:310.8px;width:9.5px;height:1.8px;background:#fff"></div>
<div style="position:absolute;left:108.8px;top:306.5px;width:12px;height:12px;border:1.5px solid #fff;border-radius:2px"></div>
<svg style="position:absolute;left:108.8px;top:306.5px" width="12" height="12" viewBox="0 0 12 12" fill="none" stroke="#fff" stroke-width="1.3"><path d="M3 6.2l2 2 4-4.4"/></svg>
<div style="position:absolute;left:130.8px;top:301.5px;white-space:nowrap;font-size:12.5px;font-weight:bold;color:#fff;line-height:23px;letter-spacing:-0.6px">OP_syn.1.1....</div>
<div style="position:absolute;left:215.5px;top:301.5px;white-space:nowrap;font-size:12.5px;font-weight:bold;color:#fff;line-height:23px;font-size:12px;letter-spacing:-0.1px">Фундамент</div>
<div style="position:absolute;left:558px;top:301.5px;width:133px;white-space:nowrap;font-size:12.5px;font-weight:bold;color:#fff;line-height:23px;text-align:center">15.10.2025 09:00</div>
<div style="position:absolute;left:691px;top:301.5px;width:127px;white-space:nowrap;font-size:12.5px;font-weight:bold;color:#fff;line-height:23px;text-align:center">27.10.2025 09:00</div>
<div style="position:absolute;left:818px;top:301.5px;width:96px;white-space:nowrap;font-size:12.5px;font-weight:bold;color:#fff;line-height:23px;text-align:right">100</div>
<div style="position:absolute;left:45px;top:325px;width:21px;white-space:nowrap;font-size:11.5px;color:#333;text-align:center;line-height:23px">9</div>
<div style="position:absolute;left:66.6px;top:324px;width:10.200000000000006px;height:23px;background:#19365f"></div>
<div style="position:absolute;left:76.5px;top:324px;width:10.599999999999998px;height:23px;background:#1d4679"></div>
<div style="position:absolute;left:86.8px;top:324px;width:10.3px;height:23px;background:#22589c"></div>
<div style="position:absolute;left:96.8px;top:324px;width:10.40000000000001px;height:23px;background:#2a69bb"></div>
<div style="position:absolute;left:106.9px;top:324px;width:811.9px;height:23px;background:#fff"></div>
<div style="position:absolute;left:106.9px;top:346px;width:811.9px;height:1px;background:repeating-linear-gradient(90deg,#c4c4c8 0 3px,transparent 3px 5px)"></div>
<div style="position:absolute;left:211px;top:324px;width:1px;height:23px;background:repeating-linear-gradient(180deg,#c4c4c8 0 3px,transparent 3px 5px)"></div>
<div style="position:absolute;left:558px;top:324px;width:1px;height:23px;background:repeating-linear-gradient(180deg,#c4c4c8 0 3px,transparent 3px 5px)"></div>
<div style="position:absolute;left:691px;top:324px;width:1px;height:23px;background:repeating-linear-gradient(180deg,#c4c4c8 0 3px,transparent 3px 5px)"></div>
<div style="position:absolute;left:818px;top:324px;width:1px;height:23px;background:repeating-linear-gradient(180deg,#c4c4c8 0 3px,transparent 3px 5px)"></div>
<div style="position:absolute;left:918.5px;top:324px;width:1px;height:23px;background:repeating-linear-gradient(180deg,#c4c4c8 0 3px,transparent 3px 5px)"></div>
<div style="position:absolute;left:108.9px;top:329.5px;width:12px;height:12px;border:1.3px solid #222;border-radius:1.5px;background:#fff"></div>
<div style="position:absolute;left:131.4px;top:323.5px;white-space:nowrap;font-size:13px;color:#222;line-height:23px">02.01.01</div>
<div style="position:absolute;left:215.5px;top:323.5px;width:341px;white-space:nowrap;font-size:13px;color:#222;line-height:23px;overflow:hidden">Устройство буронабивных свай захватка 1</div>
<div style="position:absolute;left:558px;top:323.5px;width:133px;white-space:nowrap;font-size:12.5px;color:#222;line-height:23px;letter-spacing:-0.15px;text-align:center">15.10.2025 09:00</div>
<div style="position:absolute;left:691px;top:323.5px;width:127px;white-space:nowrap;font-size:12.5px;color:#222;line-height:23px;letter-spacing:-0.15px;text-align:center">16.10.2025 16:00</div>
<div style="position:absolute;left:818px;top:323.5px;width:95.5px;white-space:nowrap;font-size:12.5px;color:#222;line-height:23px;letter-spacing:-0.15px;text-align:right">100</div>
<div style="position:absolute;left:45px;top:348px;width:21px;white-space:nowrap;font-size:11.5px;color:#333;text-align:center;line-height:23px">10</div>
<div style="position:absolute;left:66.6px;top:347px;width:10.200000000000006px;height:23px;background:#19365f"></div>
<div style="position:absolute;left:76.5px;top:347px;width:10.599999999999998px;height:23px;background:#1d4679"></div>
<div style="position:absolute;left:86.8px;top:347px;width:10.3px;height:23px;background:#22589c"></div>
<div style="position:absolute;left:96.8px;top:347px;width:10.40000000000001px;height:23px;background:#2a69bb"></div>
<div style="position:absolute;left:106.9px;top:347px;width:816.7px;height:23px;background:#dde9f6"></div>
<div style="position:absolute;left:106.9px;top:369px;width:811.9px;height:1px;background:repeating-linear-gradient(90deg,#c4c4c8 0 3px,transparent 3px 5px)"></div>
<div style="position:absolute;left:211px;top:347px;width:1px;height:23px;background:repeating-linear-gradient(180deg,#c4c4c8 0 3px,transparent 3px 5px)"></div>
<div style="position:absolute;left:558px;top:347px;width:1px;height:23px;background:repeating-linear-gradient(180deg,#c4c4c8 0 3px,transparent 3px 5px)"></div>
<div style="position:absolute;left:691px;top:347px;width:1px;height:23px;background:repeating-linear-gradient(180deg,#c4c4c8 0 3px,transparent 3px 5px)"></div>
<div style="position:absolute;left:818px;top:347px;width:1px;height:23px;background:repeating-linear-gradient(180deg,#c4c4c8 0 3px,transparent 3px 5px)"></div>
<div style="position:absolute;left:918.5px;top:347px;width:1px;height:23px;background:repeating-linear-gradient(180deg,#c4c4c8 0 3px,transparent 3px 5px)"></div>
<div style="position:absolute;left:108.9px;top:352.5px;width:12px;height:12px;background:#111;border-radius:1.5px"></div>
<svg style="position:absolute;left:108.9px;top:352.5px" width="12" height="12" viewBox="0 0 12 12" fill="none" stroke="#fff" stroke-width="1.5"><path d="M3 6.2l2 2 4-4.4"/></svg>
<div style="position:absolute;left:131.4px;top:346.5px;white-space:nowrap;font-size:13px;color:#222;line-height:23px">02.01.02</div>
<div style="position:absolute;left:215.5px;top:346.5px;width:341px;white-space:nowrap;font-size:13px;color:#222;line-height:23px;overflow:hidden">Устройство буронабивных свай захватка 2</div>
<div style="position:absolute;left:558px;top:346.5px;width:133px;white-space:nowrap;font-size:12.5px;color:#222;line-height:23px;letter-spacing:-0.15px;text-align:center">17.10.2025 09:00</div>
<div style="position:absolute;left:691px;top:346.5px;width:127px;white-space:nowrap;font-size:12.5px;color:#222;line-height:23px;letter-spacing:-0.15px;text-align:center">22.10.2025 09:00</div>
<div style="position:absolute;left:818px;top:346.5px;width:95.5px;white-space:nowrap;font-size:12.5px;color:#222;line-height:23px;letter-spacing:-0.15px;text-align:right">100</div>
<div style="position:absolute;left:45px;top:371px;width:21px;white-space:nowrap;font-size:11.5px;color:#333;text-align:center;line-height:23px">11</div>
<div style="position:absolute;left:66.6px;top:370px;width:10.200000000000006px;height:23px;background:#19365f"></div>
<div style="position:absolute;left:76.5px;top:370px;width:10.599999999999998px;height:23px;background:#1d4679"></div>
<div style="position:absolute;left:86.8px;top:370px;width:10.3px;height:23px;background:#22589c"></div>
<div style="position:absolute;left:96.8px;top:370px;width:10.40000000000001px;height:23px;background:#2a69bb"></div>
<div style="position:absolute;left:106.9px;top:370px;width:811.9px;height:23px;background:#fff"></div>
<div style="position:absolute;left:106.9px;top:392px;width:811.9px;height:1px;background:repeating-linear-gradient(90deg,#c4c4c8 0 3px,transparent 3px 5px)"></div>
<div style="position:absolute;left:211px;top:370px;width:1px;height:23px;background:repeating-linear-gradient(180deg,#c4c4c8 0 3px,transparent 3px 5px)"></div>
<div style="position:absolute;left:558px;top:370px;width:1px;height:23px;background:repeating-linear-gradient(180deg,#c4c4c8 0 3px,transparent 3px 5px)"></div>
<div style="position:absolute;left:691px;top:370px;width:1px;height:23px;background:repeating-linear-gradient(180deg,#c4c4c8 0 3px,transparent 3px 5px)"></div>
<div style="position:absolute;left:818px;top:370px;width:1px;height:23px;background:repeating-linear-gradient(180deg,#c4c4c8 0 3px,transparent 3px 5px)"></div>
<div style="position:absolute;left:918.5px;top:370px;width:1px;height:23px;background:repeating-linear-gradient(180deg,#c4c4c8 0 3px,transparent 3px 5px)"></div>
<div style="position:absolute;left:108.9px;top:375.5px;width:12px;height:12px;border:1.3px solid #222;border-radius:1.5px;background:#fff"></div>
<div style="position:absolute;left:131.4px;top:369.5px;white-space:nowrap;font-size:13px;color:#222;line-height:23px">02.01.03</div>
<div style="position:absolute;left:215.5px;top:369.5px;width:341px;white-space:nowrap;font-size:13px;color:#222;line-height:23px;overflow:hidden">Устройство буронабивных свай захватка 3</div>
<div style="position:absolute;left:558px;top:369.5px;width:133px;white-space:nowrap;font-size:12.5px;color:#222;line-height:23px;letter-spacing:-0.15px;text-align:center">19.10.2025 09:00</div>
<div style="position:absolute;left:691px;top:369.5px;width:127px;white-space:nowrap;font-size:12.5px;color:#222;line-height:23px;letter-spacing:-0.15px;text-align:center">20.10.2025 16:00</div>
<div style="position:absolute;left:818px;top:369.5px;width:95.5px;white-space:nowrap;font-size:12.5px;color:#222;line-height:23px;letter-spacing:-0.15px;text-align:right">100</div>
<div style="position:absolute;left:45px;top:394px;width:21px;white-space:nowrap;font-size:11.5px;color:#333;text-align:center;line-height:23px">12</div>
<div style="position:absolute;left:66.6px;top:393px;width:10.200000000000006px;height:23px;background:#19365f"></div>
<div style="position:absolute;left:76.5px;top:393px;width:10.599999999999998px;height:23px;background:#1d4679"></div>
<div style="position:absolute;left:86.8px;top:393px;width:10.3px;height:23px;background:#22589c"></div>
<div style="position:absolute;left:96.8px;top:393px;width:10.40000000000001px;height:23px;background:#2a69bb"></div>
<div style="position:absolute;left:106.9px;top:393px;width:811.9px;height:23px;background:#fff"></div>
<div style="position:absolute;left:106.9px;top:415px;width:811.9px;height:1px;background:repeating-linear-gradient(90deg,#c4c4c8 0 3px,transparent 3px 5px)"></div>
<div style="position:absolute;left:211px;top:393px;width:1px;height:23px;background:repeating-linear-gradient(180deg,#c4c4c8 0 3px,transparent 3px 5px)"></div>
<div style="position:absolute;left:558px;top:393px;width:1px;height:23px;background:repeating-linear-gradient(180deg,#c4c4c8 0 3px,transparent 3px 5px)"></div>
<div style="position:absolute;left:691px;top:393px;width:1px;height:23px;background:repeating-linear-gradient(180deg,#c4c4c8 0 3px,transparent 3px 5px)"></div>
<div style="position:absolute;left:818px;top:393px;width:1px;height:23px;background:repeating-linear-gradient(180deg,#c4c4c8 0 3px,transparent 3px 5px)"></div>
<div style="position:absolute;left:918.5px;top:393px;width:1px;height:23px;background:repeating-linear-gradient(180deg,#c4c4c8 0 3px,transparent 3px 5px)"></div>
<div style="position:absolute;left:108.9px;top:398.5px;width:12px;height:12px;border:1.3px solid #222;border-radius:1.5px;background:#fff"></div>
<div style="position:absolute;left:131.4px;top:392.5px;white-space:nowrap;font-size:13px;color:#222;line-height:23px">02.01.04</div>
<div style="position:absolute;left:215.5px;top:392.5px;width:341px;white-space:nowrap;font-size:13px;color:#222;line-height:23px;overflow:hidden">Устройство буронабивных свай захватка 4</div>
<div style="position:absolute;left:558px;top:392.5px;width:133px;white-space:nowrap;font-size:12.5px;color:#222;line-height:23px;letter-spacing:-0.15px;text-align:center">21.10.2025 09:00</div>
<div style="position:absolute;left:691px;top:392.5px;width:127px;white-space:nowrap;font-size:12.5px;color:#222;line-height:23px;letter-spacing:-0.15px;text-align:center">22.10.2025 16:00</div>
<div style="position:absolute;left:818px;top:392.5px;width:95.5px;white-space:nowrap;font-size:12.5px;color:#222;line-height:23px;letter-spacing:-0.15px;text-align:right">66</div>
<div style="position:absolute;left:45px;top:417px;width:21px;white-space:nowrap;font-size:11.5px;color:#333;text-align:center;line-height:23px">13</div>
<div style="position:absolute;left:66.6px;top:416px;width:10.200000000000006px;height:23px;background:#19365f"></div>
<div style="position:absolute;left:76.5px;top:416px;width:10.599999999999998px;height:23px;background:#1d4679"></div>
<div style="position:absolute;left:86.8px;top:416px;width:10.3px;height:23px;background:#22589c"></div>
<div style="position:absolute;left:96.8px;top:416px;width:10.40000000000001px;height:23px;background:#2a69bb"></div>
<div style="position:absolute;left:106.9px;top:416px;width:811.9px;height:23px;background:#fff"></div>
<div style="position:absolute;left:106.9px;top:438px;width:811.9px;height:1px;background:repeating-linear-gradient(90deg,#c4c4c8 0 3px,transparent 3px 5px)"></div>
<div style="position:absolute;left:211px;top:416px;width:1px;height:23px;background:repeating-linear-gradient(180deg,#c4c4c8 0 3px,transparent 3px 5px)"></div>
<div style="position:absolute;left:558px;top:416px;width:1px;height:23px;background:repeating-linear-gradient(180deg,#c4c4c8 0 3px,transparent 3px 5px)"></div>
<div style="position:absolute;left:691px;top:416px;width:1px;height:23px;background:repeating-linear-gradient(180deg,#c4c4c8 0 3px,transparent 3px 5px)"></div>
<div style="position:absolute;left:818px;top:416px;width:1px;height:23px;background:repeating-linear-gradient(180deg,#c4c4c8 0 3px,transparent 3px 5px)"></div>
<div style="position:absolute;left:918.5px;top:416px;width:1px;height:23px;background:repeating-linear-gradient(180deg,#c4c4c8 0 3px,transparent 3px 5px)"></div>
<div style="position:absolute;left:108.9px;top:421.5px;width:12px;height:12px;border:1.3px solid #222;border-radius:1.5px;background:#fff"></div>
<div style="position:absolute;left:131.4px;top:415.5px;white-space:nowrap;font-size:13px;color:#222;line-height:23px">02.01.05</div>
<div style="position:absolute;left:215.5px;top:415.5px;width:341px;white-space:nowrap;font-size:13px;color:#222;line-height:23px;overflow:hidden">Устройство фундаментной плиты</div>
<div style="position:absolute;left:558px;top:415.5px;width:133px;white-space:nowrap;font-size:12.5px;color:#222;line-height:23px;letter-spacing:-0.15px;text-align:center">23.10.2025 09:00</div>
<div style="position:absolute;left:691px;top:415.5px;width:127px;white-space:nowrap;font-size:12.5px;color:#222;line-height:23px;letter-spacing:-0.15px;text-align:center">27.10.2025 09:00</div>
<div style="position:absolute;left:818px;top:415.5px;width:95.5px;white-space:nowrap;font-size:12.5px;color:#222;line-height:23px;letter-spacing:-0.15px;text-align:right">79</div>
<div style="position:absolute;left:45px;top:440px;width:21px;white-space:nowrap;font-size:11.5px;color:#333;text-align:center;line-height:23px">14</div>
<div style="position:absolute;left:66.6px;top:439px;width:10.200000000000006px;height:23px;background:#19365f"></div>
<div style="position:absolute;left:76.5px;top:439px;width:10.599999999999998px;height:23px;background:#1d4679"></div>
<div style="position:absolute;left:86.8px;top:439px;width:10.3px;height:23px;background:#22589c"></div>
<div style="position:absolute;left:96.8px;top:439px;width:822.0px;height:23px;background:#2a69bb"></div>
<div style="position:absolute;left:97.3px;top:448.8px;width:9.5px;height:1.8px;background:#fff"></div>
<div style="position:absolute;left:108.8px;top:444.5px;width:12px;height:12px;border:1.5px solid #fff;border-radius:2px"></div>
<div style="position:absolute;left:130.8px;top:439.5px;white-space:nowrap;font-size:12.5px;font-weight:bold;color:#fff;line-height:23px;letter-spacing:-0.6px">OP_syn.1.1....</div>
<div style="position:absolute;left:215.5px;top:439.5px;white-space:nowrap;font-size:12.5px;font-weight:bold;color:#fff;line-height:23px;font-size:12px;letter-spacing:-0.1px">Монолитные работы подземной части</div>
<div style="position:absolute;left:558px;top:439.5px;width:133px;white-space:nowrap;font-size:12.5px;font-weight:bold;color:#fff;line-height:23px;text-align:center">28.10.2025 09:00</div>
<div style="position:absolute;left:691px;top:439.5px;width:127px;white-space:nowrap;font-size:12.5px;font-weight:bold;color:#fff;line-height:23px;text-align:center">07.11.2025 18:00</div>
<div style="position:absolute;left:818px;top:439.5px;width:96px;white-space:nowrap;font-size:12.5px;font-weight:bold;color:#fff;line-height:23px;text-align:right">18</div>
<div style="position:absolute;left:45px;top:463px;width:21px;white-space:nowrap;font-size:11.5px;color:#333;text-align:center;line-height:23px">15</div>
<div style="position:absolute;left:66.6px;top:462px;width:10.200000000000006px;height:23px;background:#19365f"></div>
<div style="position:absolute;left:76.5px;top:462px;width:10.599999999999998px;height:23px;background:#1d4679"></div>
<div style="position:absolute;left:86.8px;top:462px;width:10.3px;height:23px;background:#22589c"></div>
<div style="position:absolute;left:96.8px;top:462px;width:10.40000000000001px;height:23px;background:#2a69bb"></div>
<div style="position:absolute;left:106.9px;top:462px;width:811.9px;height:23px;background:#fff"></div>
<div style="position:absolute;left:106.9px;top:484px;width:811.9px;height:1px;background:repeating-linear-gradient(90deg,#c4c4c8 0 3px,transparent 3px 5px)"></div>
<div style="position:absolute;left:211px;top:462px;width:1px;height:23px;background:repeating-linear-gradient(180deg,#c4c4c8 0 3px,transparent 3px 5px)"></div>
<div style="position:absolute;left:558px;top:462px;width:1px;height:23px;background:repeating-linear-gradient(180deg,#c4c4c8 0 3px,transparent 3px 5px)"></div>
<div style="position:absolute;left:691px;top:462px;width:1px;height:23px;background:repeating-linear-gradient(180deg,#c4c4c8 0 3px,transparent 3px 5px)"></div>
<div style="position:absolute;left:818px;top:462px;width:1px;height:23px;background:repeating-linear-gradient(180deg,#c4c4c8 0 3px,transparent 3px 5px)"></div>
<div style="position:absolute;left:918.5px;top:462px;width:1px;height:23px;background:repeating-linear-gradient(180deg,#c4c4c8 0 3px,transparent 3px 5px)"></div>
<div style="position:absolute;left:108.9px;top:467.5px;width:12px;height:12px;border:1.3px solid #222;border-radius:1.5px;background:#fff"></div>
<div style="position:absolute;left:131.4px;top:461.5px;white-space:nowrap;font-size:13px;color:#222;line-height:23px">02.02.01</div>
<div style="position:absolute;left:215.5px;top:461.5px;width:341px;white-space:nowrap;font-size:13px;color:#222;line-height:23px;overflow:hidden">Устройство монолитных стен цокольного этажа</div>
<div style="position:absolute;left:558px;top:461.5px;width:133px;white-space:nowrap;font-size:12.5px;color:#222;line-height:23px;letter-spacing:-0.15px;text-align:center">28.10.2025 09:00</div>
<div style="position:absolute;left:691px;top:461.5px;width:127px;white-space:nowrap;font-size:12.5px;color:#222;line-height:23px;letter-spacing:-0.15px;text-align:center">29.10.2025 18:00</div>
<div style="position:absolute;left:818px;top:461.5px;width:95.5px;white-space:nowrap;font-size:12.5px;color:#222;line-height:23px;letter-spacing:-0.15px;text-align:right">23</div>
<div style="position:absolute;left:45px;top:486px;width:21px;white-space:nowrap;font-size:11.5px;color:#333;text-align:center;line-height:23px">16</div>
<div style="position:absolute;left:66.6px;top:485px;width:10.200000000000006px;height:23px;background:#19365f"></div>
<div style="position:absolute;left:76.5px;top:485px;width:10.599999999999998px;height:23px;background:#1d4679"></div>
<div style="position:absolute;left:86.8px;top:485px;width:10.3px;height:23px;background:#22589c"></div>
<div style="position:absolute;left:96.8px;top:485px;width:10.40000000000001px;height:23px;background:#2a69bb"></div>
<div style="position:absolute;left:106.9px;top:485px;width:811.9px;height:23px;background:#fff"></div>
<div style="position:absolute;left:106.9px;top:507px;width:811.9px;height:1px;background:repeating-linear-gradient(90deg,#c4c4c8 0 3px,transparent 3px 5px)"></div>
<div style="position:absolute;left:211px;top:485px;width:1px;height:23px;background:repeating-linear-gradient(180deg,#c4c4c8 0 3px,transparent 3px 5px)"></div>
<div style="position:absolute;left:558px;top:485px;width:1px;height:23px;background:repeating-linear-gradient(180deg,#c4c4c8 0 3px,transparent 3px 5px)"></div>
<div style="position:absolute;left:691px;top:485px;width:1px;height:23px;background:repeating-linear-gradient(180deg,#c4c4c8 0 3px,transparent 3px 5px)"></div>
<div style="position:absolute;left:818px;top:485px;width:1px;height:23px;background:repeating-linear-gradient(180deg,#c4c4c8 0 3px,transparent 3px 5px)"></div>
<div style="position:absolute;left:918.5px;top:485px;width:1px;height:23px;background:repeating-linear-gradient(180deg,#c4c4c8 0 3px,transparent 3px 5px)"></div>
<div style="position:absolute;left:108.9px;top:490.5px;width:12px;height:12px;border:1.3px solid #222;border-radius:1.5px;background:#fff"></div>
<div style="position:absolute;left:131.4px;top:484.5px;white-space:nowrap;font-size:13px;color:#222;line-height:23px">02.02.02</div>
<div style="position:absolute;left:215.5px;top:484.5px;width:341px;white-space:nowrap;font-size:13px;color:#222;line-height:23px;overflow:hidden">Устройство монолитного перекрытия цокольного этажа</div>
<div style="position:absolute;left:558px;top:484.5px;width:133px;white-space:nowrap;font-size:12.5px;color:#222;line-height:23px;letter-spacing:-0.15px;text-align:center">30.10.2025 09:00</div>
<div style="position:absolute;left:691px;top:484.5px;width:127px;white-space:nowrap;font-size:12.5px;color:#222;line-height:23px;letter-spacing:-0.15px;text-align:center">03.11.2025 18:00</div>
<div style="position:absolute;left:818px;top:484.5px;width:95.5px;white-space:nowrap;font-size:12.5px;color:#222;line-height:23px;letter-spacing:-0.15px;text-align:right">25</div>
<div style="position:absolute;left:45px;top:509px;width:21px;white-space:nowrap;font-size:11.5px;color:#333;text-align:center;line-height:23px">17</div>
<div style="position:absolute;left:66.6px;top:508px;width:10.200000000000006px;height:23px;background:#19365f"></div>
<div style="position:absolute;left:76.5px;top:508px;width:10.599999999999998px;height:23px;background:#1d4679"></div>
<div style="position:absolute;left:86.8px;top:508px;width:10.3px;height:23px;background:#22589c"></div>
<div style="position:absolute;left:96.8px;top:508px;width:10.40000000000001px;height:23px;background:#2a69bb"></div>
<div style="position:absolute;left:106.9px;top:508px;width:811.9px;height:23px;background:#fff"></div>
<div style="position:absolute;left:106.9px;top:530px;width:811.9px;height:1px;background:repeating-linear-gradient(90deg,#c4c4c8 0 3px,transparent 3px 5px)"></div>
<div style="position:absolute;left:211px;top:508px;width:1px;height:23px;background:repeating-linear-gradient(180deg,#c4c4c8 0 3px,transparent 3px 5px)"></div>
<div style="position:absolute;left:558px;top:508px;width:1px;height:23px;background:repeating-linear-gradient(180deg,#c4c4c8 0 3px,transparent 3px 5px)"></div>
<div style="position:absolute;left:691px;top:508px;width:1px;height:23px;background:repeating-linear-gradient(180deg,#c4c4c8 0 3px,transparent 3px 5px)"></div>
<div style="position:absolute;left:818px;top:508px;width:1px;height:23px;background:repeating-linear-gradient(180deg,#c4c4c8 0 3px,transparent 3px 5px)"></div>
<div style="position:absolute;left:918.5px;top:508px;width:1px;height:23px;background:repeating-linear-gradient(180deg,#c4c4c8 0 3px,transparent 3px 5px)"></div>
<div style="position:absolute;left:108.9px;top:513.5px;width:12px;height:12px;border:1.3px solid #222;border-radius:1.5px;background:#fff"></div>
<div style="position:absolute;left:131.4px;top:507.5px;white-space:nowrap;font-size:13px;color:#222;line-height:23px">02.02.03</div>
<div style="position:absolute;left:215.5px;top:507.5px;width:341px;white-space:nowrap;font-size:13px;color:#222;line-height:23px;overflow:hidden">Устройство монолитной входной лестницы</div>
<div style="position:absolute;left:558px;top:507.5px;width:133px;white-space:nowrap;font-size:12.5px;color:#222;line-height:23px;letter-spacing:-0.15px;text-align:center">06.11.2025 09:00</div>
<div style="position:absolute;left:691px;top:507.5px;width:127px;white-space:nowrap;font-size:12.5px;color:#222;line-height:23px;letter-spacing:-0.15px;text-align:center">07.11.2025 18:00</div>
<div style="position:absolute;left:818px;top:507.5px;width:95.5px;white-space:nowrap;font-size:12.5px;color:#222;line-height:23px;letter-spacing:-0.15px;text-align:right">12</div>
<div style="position:absolute;left:45px;top:532px;width:21px;white-space:nowrap;font-size:11.5px;color:#333;text-align:center;line-height:23px">18</div>
<div style="position:absolute;left:66.6px;top:531px;width:10.200000000000006px;height:23px;background:#19365f"></div>
<div style="position:absolute;left:76.5px;top:531px;width:10.599999999999998px;height:23px;background:#1d4679"></div>
<div style="position:absolute;left:86.8px;top:531px;width:10.3px;height:23px;background:#22589c"></div>
<div style="position:absolute;left:96.8px;top:531px;width:822.0px;height:23px;background:#2a69bb"></div>
<div style="position:absolute;left:97.3px;top:540.8px;width:9.5px;height:1.8px;background:#fff"></div>
<div style="position:absolute;left:108.8px;top:536.5px;width:12px;height:12px;border:1.5px solid #fff;border-radius:2px"></div>
<div style="position:absolute;left:130.8px;top:531.5px;white-space:nowrap;font-size:12.5px;font-weight:bold;color:#fff;line-height:23px;letter-spacing:-0.6px">OP_syn.1.1....</div>
<div style="position:absolute;left:215.5px;top:531.5px;white-space:nowrap;font-size:12.5px;font-weight:bold;color:#fff;line-height:23px;font-size:12px;letter-spacing:-0.1px">Монолитные работы надземной части</div>
<div style="position:absolute;left:558px;top:531.5px;width:133px;white-space:nowrap;font-size:12.5px;font-weight:bold;color:#fff;line-height:23px;text-align:center">04.11.2025 09:00</div>
<div style="position:absolute;left:691px;top:531.5px;width:127px;white-space:nowrap;font-size:12.5px;font-weight:bold;color:#fff;line-height:23px;text-align:center">30.11.2025 18:00</div>
<div style="position:absolute;left:818px;top:531.5px;width:96px;white-space:nowrap;font-size:12.5px;font-weight:bold;color:#fff;line-height:23px;text-align:right">0</div>
<div style="position:absolute;left:45px;top:555px;width:21px;white-space:nowrap;font-size:11.5px;color:#333;text-align:center;line-height:23px">19</div>
<div style="position:absolute;left:66.6px;top:554px;width:10.200000000000006px;height:23px;background:#19365f"></div>
<div style="position:absolute;left:76.5px;top:554px;width:10.599999999999998px;height:23px;background:#1d4679"></div>
<div style="position:absolute;left:86.8px;top:554px;width:10.3px;height:23px;background:#22589c"></div>
<div style="position:absolute;left:96.8px;top:554px;width:10.40000000000001px;height:23px;background:#2a69bb"></div>
<div style="position:absolute;left:106.9px;top:554px;width:811.9px;height:23px;background:#fff"></div>
<div style="position:absolute;left:106.9px;top:576px;width:811.9px;height:1px;background:repeating-linear-gradient(90deg,#c4c4c8 0 3px,transparent 3px 5px)"></div>
<div style="position:absolute;left:211px;top:554px;width:1px;height:23px;background:repeating-linear-gradient(180deg,#c4c4c8 0 3px,transparent 3px 5px)"></div>
<div style="position:absolute;left:558px;top:554px;width:1px;height:23px;background:repeating-linear-gradient(180deg,#c4c4c8 0 3px,transparent 3px 5px)"></div>
<div style="position:absolute;left:691px;top:554px;width:1px;height:23px;background:repeating-linear-gradient(180deg,#c4c4c8 0 3px,transparent 3px 5px)"></div>
<div style="position:absolute;left:818px;top:554px;width:1px;height:23px;background:repeating-linear-gradient(180deg,#c4c4c8 0 3px,transparent 3px 5px)"></div>
<div style="position:absolute;left:918.5px;top:554px;width:1px;height:23px;background:repeating-linear-gradient(180deg,#c4c4c8 0 3px,transparent 3px 5px)"></div>
<div style="position:absolute;left:108.9px;top:559.5px;width:12px;height:12px;border:1.3px solid #222;border-radius:1.5px;background:#fff"></div>
<div style="position:absolute;left:131.4px;top:553.5px;white-space:nowrap;font-size:13px;color:#222;line-height:23px">02.03.01</div>
<div style="position:absolute;left:215.5px;top:553.5px;width:341px;white-space:nowrap;font-size:13px;color:#222;line-height:23px;overflow:hidden">Устройство наружных монолитных стен 1-го этажа</div>
<div style="position:absolute;left:558px;top:553.5px;width:133px;white-space:nowrap;font-size:12.5px;color:#222;line-height:23px;letter-spacing:-0.15px;text-align:center">04.11.2025 09:00</div>
<div style="position:absolute;left:691px;top:553.5px;width:127px;white-space:nowrap;font-size:12.5px;color:#222;line-height:23px;letter-spacing:-0.15px;text-align:center">05.11.2025 11:00</div>
<div style="position:absolute;left:818px;top:553.5px;width:95.5px;white-space:nowrap;font-size:12.5px;color:#222;line-height:23px;letter-spacing:-0.15px;text-align:right">10</div>
<div style="position:absolute;left:45px;top:578px;width:21px;white-space:nowrap;font-size:11.5px;color:#333;text-align:center;line-height:23px">20</div>
<div style="position:absolute;left:66.6px;top:577px;width:10.200000000000006px;height:23px;background:#19365f"></div>
<div style="position:absolute;left:76.5px;top:577px;width:10.599999999999998px;height:23px;background:#1d4679"></div>
<div style="position:absolute;left:86.8px;top:577px;width:10.3px;height:23px;background:#22589c"></div>
<div style="position:absolute;left:96.8px;top:577px;width:10.40000000000001px;height:23px;background:#2a69bb"></div>
<div style="position:absolute;left:106.9px;top:577px;width:811.9px;height:23px;background:#fff"></div>
<div style="position:absolute;left:106.9px;top:599px;width:811.9px;height:1px;background:repeating-linear-gradient(90deg,#c4c4c8 0 3px,transparent 3px 5px)"></div>
<div style="position:absolute;left:211px;top:577px;width:1px;height:23px;background:repeating-linear-gradient(180deg,#c4c4c8 0 3px,transparent 3px 5px)"></div>
<div style="position:absolute;left:558px;top:577px;width:1px;height:23px;background:repeating-linear-gradient(180deg,#c4c4c8 0 3px,transparent 3px 5px)"></div>
<div style="position:absolute;left:691px;top:577px;width:1px;height:23px;background:repeating-linear-gradient(180deg,#c4c4c8 0 3px,transparent 3px 5px)"></div>
<div style="position:absolute;left:818px;top:577px;width:1px;height:23px;background:repeating-linear-gradient(180deg,#c4c4c8 0 3px,transparent 3px 5px)"></div>
<div style="position:absolute;left:918.5px;top:577px;width:1px;height:23px;background:repeating-linear-gradient(180deg,#c4c4c8 0 3px,transparent 3px 5px)"></div>
<div style="position:absolute;left:108.9px;top:582.5px;width:12px;height:12px;border:1.3px solid #222;border-radius:1.5px;background:#fff"></div>
<div style="position:absolute;left:131.4px;top:576.5px;white-space:nowrap;font-size:13px;color:#222;line-height:23px">02.03.02</div>
<div style="position:absolute;left:215.5px;top:576.5px;width:341px;white-space:nowrap;font-size:13px;color:#222;line-height:23px;overflow:hidden">Устройство внутренних монолитных стен 1-го этажа</div>
<div style="position:absolute;left:558px;top:576.5px;width:133px;white-space:nowrap;font-size:12.5px;color:#222;line-height:23px;letter-spacing:-0.15px;text-align:center">04.11.2025 09:00</div>
<div style="position:absolute;left:691px;top:576.5px;width:127px;white-space:nowrap;font-size:12.5px;color:#222;line-height:23px;letter-spacing:-0.15px;text-align:center">05.11.2025 18:00</div>
<div style="position:absolute;left:818px;top:576.5px;width:95.5px;white-space:nowrap;font-size:12.5px;color:#222;line-height:23px;letter-spacing:-0.15px;text-align:right">56</div>
<div style="position:absolute;left:943px;top:90px;width:975px;height:510px;background:#fff"></div>
<div style="position:absolute;left:943px;top:104px;width:975px;height:1.5px;background:#d6d6da"></div>
<div style="position:absolute;left:943px;top:121.5px;width:975px;height:1.5px;background:#d6d6da"></div>
<div style="position:absolute;left:943px;top:138.2px;width:975px;height:1.5px;background:#d6d6da"></div>
<div style="position:absolute;left:1315.4px;top:105px;width:1px;height:17px;background:#d6d6da"></div>
<div style="position:absolute;left:1769.4px;top:105px;width:1px;height:17px;background:#d6d6da"></div>
<div style="position:absolute;left:1027.4px;top:122px;width:1px;height:17px;background:#d6d6da"></div>
<div style="position:absolute;left:1133.4px;top:122px;width:1px;height:17px;background:#d6d6da"></div>
<div style="position:absolute;left:1239.4px;top:122px;width:1px;height:17px;background:#d6d6da"></div>
<div style="position:absolute;left:1345.3px;top:122px;width:1px;height:17px;background:#d6d6da"></div>
<div style="position:absolute;left:1451.3px;top:122px;width:1px;height:17px;background:#d6d6da"></div>
<div style="position:absolute;left:1557.3px;top:122px;width:1px;height:17px;background:#d6d6da"></div>
<div style="position:absolute;left:1663.4px;top:122px;width:1px;height:17px;background:#d6d6da"></div>
<div style="position:absolute;left:1769.4px;top:122px;width:1px;height:17px;background:#d6d6da"></div>
<div style="position:absolute;left:1875.2px;top:122px;width:1px;height:17px;background:#d6d6da"></div>
<div style="position:absolute;left:1383px;top:88.5px;width:100px;white-space:nowrap;font-size:12.5px;color:#222;line-height:17px;text-align:center">2025</div>
<div style="position:absolute;left:1079px;top:105.5px;width:100px;white-space:nowrap;font-size:12.5px;color:#222;line-height:17px;text-align:center">октябрь</div>
<div style="position:absolute;left:1499px;top:105.5px;width:100px;white-space:nowrap;font-size:12.5px;color:#222;line-height:17px;text-align:center">ноябрь</div>
<div style="position:absolute;left:1796px;top:105.5px;width:100px;white-space:nowrap;font-size:12.5px;color:#222;line-height:17px;text-align:center">декабрь</div>
<div style="position:absolute;left:921.5px;top:122.5px;width:105.9px;white-space:nowrap;font-size:12.5px;color:#222;line-height:17px;text-align:center">6 - 12</div>
<div style="position:absolute;left:1027.4px;top:122.5px;width:105.9px;white-space:nowrap;font-size:12.5px;color:#222;line-height:17px;text-align:center">13 - 19</div>
<div style="position:absolute;left:1133.3px;top:122.5px;width:105.9px;white-space:nowrap;font-size:12.5px;color:#222;line-height:17px;text-align:center">20 - 26</div>
<div style="position:absolute;left:1239.2px;top:122.5px;width:105.9px;white-space:nowrap;font-size:12.5px;color:#222;line-height:17px;text-align:center">27 - 2</div>
<div style="position:absolute;left:1345.1px;top:122.5px;width:105.9px;white-space:nowrap;font-size:12.5px;color:#222;line-height:17px;text-align:center">3 - 9</div>
<div style="position:absolute;left:1451.0px;top:122.5px;width:105.9px;white-space:nowrap;font-size:12.5px;color:#222;line-height:17px;text-align:center">10 - 16</div>
<div style="position:absolute;left:1556.9px;top:122.5px;width:105.9px;white-space:nowrap;font-size:12.5px;color:#222;line-height:17px;text-align:center">17 - 23</div>
<div style="position:absolute;left:1662.8000000000002px;top:122.5px;width:105.9px;white-space:nowrap;font-size:12.5px;color:#222;line-height:17px;text-align:center">24 - 30</div>
<div style="position:absolute;left:1768.7px;top:122.5px;width:105.9px;white-space:nowrap;font-size:12.5px;color:#222;line-height:17px;text-align:center">1 - 7</div>
<div style="position:absolute;left:1874.6px;top:122.5px;width:105.9px;white-space:nowrap;font-size:12.5px;color:#222;line-height:17px;text-align:center">8 - 14</div>
<div style="position:absolute;left:937px;top:89px;width:6px;height:511px;background:#b8b8c0"></div>
<div style="position:absolute;left:1910px;top:139.7px;width:8px;height:460px;background:#f2f2f5"></div>
<div style="position:absolute;left:1910px;top:140.5px;width:8px;height:45px;border-radius:5px 0 0 5px;background:#d8d8dc"></div>
<div style="position:absolute;left:943px;top:347px;width:967px;height:23px;background:#dde9f6"></div>
<svg style="position:absolute;left:0;top:0;overflow:visible" width="1918" height="912" viewBox="0 0 1918 912"><defs><clipPath id="gc"><rect x="943" y="139" width="967" height="460"/></clipPath></defs><g clip-path="url(#gc)"><line x1="943" y1="139.8" x2="1910" y2="139.8" stroke="#e0e0e4" stroke-width="1" stroke-dasharray="2.5 3.5"/><line x1="943" y1="162.8" x2="1910" y2="162.8" stroke="#e0e0e4" stroke-width="1" stroke-dasharray="2.5 3.5"/><line x1="943" y1="185.8" x2="1910" y2="185.8" stroke="#e0e0e4" stroke-width="1" stroke-dasharray="2.5 3.5"/><line x1="943" y1="208.8" x2="1910" y2="208.8" stroke="#e0e0e4" stroke-width="1" stroke-dasharray="2.5 3.5"/><line x1="943" y1="231.8" x2="1910" y2="231.8" stroke="#e0e0e4" stroke-width="1" stroke-dasharray="2.5 3.5"/><line x1="943" y1="254.8" x2="1910" y2="254.8" stroke="#e0e0e4" stroke-width="1" stroke-dasharray="2.5 3.5"/><line x1="943" y1="277.8" x2="1910" y2="277.8" stroke="#e0e0e4" stroke-width="1" stroke-dasharray="2.5 3.5"/><line x1="943" y1="300.8" x2="1910" y2="300.8" stroke="#e0e0e4" stroke-width="1" stroke-dasharray="2.5 3.5"/><line x1="943" y1="323.8" x2="1910" y2="323.8" stroke="#e0e0e4" stroke-width="1" stroke-dasharray="2.5 3.5"/><line x1="943" y1="346.8" x2="1910" y2="346.8" stroke="#e0e0e4" stroke-width="1" stroke-dasharray="2.5 3.5"/><line x1="943" y1="369.8" x2="1910" y2="369.8" stroke="#e0e0e4" stroke-width="1" stroke-dasharray="2.5 3.5"/><line x1="943" y1="392.8" x2="1910" y2="392.8" stroke="#e0e0e4" stroke-width="1" stroke-dasharray="2.5 3.5"/><line x1="943" y1="415.8" x2="1910" y2="415.8" stroke="#e0e0e4" stroke-width="1" stroke-dasharray="2.5 3.5"/><line x1="943" y1="438.8" x2="1910" y2="438.8" stroke="#e0e0e4" stroke-width="1" stroke-dasharray="2.5 3.5"/><line x1="943" y1="461.8" x2="1910" y2="461.8" stroke="#e0e0e4" stroke-width="1" stroke-dasharray="2.5 3.5"/><line x1="943" y1="484.8" x2="1910" y2="484.8" stroke="#e0e0e4" stroke-width="1" stroke-dasharray="2.5 3.5"/><line x1="943" y1="507.8" x2="1910" y2="507.8" stroke="#e0e0e4" stroke-width="1" stroke-dasharray="2.5 3.5"/><line x1="943" y1="530.8" x2="1910" y2="530.8" stroke="#e0e0e4" stroke-width="1" stroke-dasharray="2.5 3.5"/><line x1="943" y1="553.8" x2="1910" y2="553.8" stroke="#e0e0e4" stroke-width="1" stroke-dasharray="2.5 3.5"/><line x1="943" y1="576.8" x2="1910" y2="576.8" stroke="#e0e0e4" stroke-width="1" stroke-dasharray="2.5 3.5"/><line x1="943" y1="599.8" x2="1910" y2="599.8" stroke="#e0e0e4" stroke-width="1" stroke-dasharray="2.5 3.5"/><polygon points="957.3,142 1912,142 1912,145.7 962.3,145.7 957.3,149.5" fill="#d3d3d3"/><polygon points="957.3,151 1912,151 1912,154.7 962.3,154.7 957.3,158.8" fill="#000"/><polygon points="957.3,165 1912,165 1912,168.7 962.3,168.7 957.3,172.5" fill="#d3d3d3"/><polygon points="957.3,174 1912,174 1912,177.7 962.3,177.7 957.3,181.8" fill="#000"/><polygon points="957.3,188 1053.8,188 1053.8,195.5 1048.8,191.7 962.3,191.7 957.3,195.5" fill="#d3d3d3"/><polygon points="957.3,197 1053.8,197 1053.8,204.8 1048.8,200.7 962.3,200.7 957.3,204.8" fill="#000"/><rect x="957.7" y="211.2" width="35.59999999999995" height="4.8" fill="#d6d6d6" stroke="#8e8e8e" stroke-width="1.2"/><rect x="957.1" y="220" width="36.5" height="10" fill="#26c58f"/><rect x="957.1" y="220" width="36.5" height="10" fill="#0a74e2"/><rect x="957.1" y="220" width="4" height="10" fill="#000"/><path d="M957.1 229.6H993.0V220.5" fill="none" stroke="#1f2a36" stroke-width="1.2" stroke-opacity="0.85"/><rect x="1003.2" y="234.2" width="20.400000000000023" height="4.8" fill="#d6d6d6" stroke="#8e8e8e" stroke-width="1.2"/><rect x="1006.2" y="243" width="17.5" height="10" fill="#26c58f"/><rect x="1006.2" y="243" width="17.5" height="10" fill="#0a74e2"/><path d="M1006.2 252.6H1023.1V243.5" fill="none" stroke="#1f2a36" stroke-width="1.2" stroke-opacity="0.85"/><rect x="1033.6999999999998" y="257.2" width="19.70000000000009" height="4.8" fill="#d6d6d6" stroke="#8e8e8e" stroke-width="1.2"/><rect x="1033.1" y="266" width="20.700000000000045" height="10" fill="#26c58f"/><rect x="1033.1" y="266" width="20.700000000000045" height="10" fill="#0a74e2"/><path d="M1033.1 275.6H1053.2V266.5" fill="none" stroke="#1f2a36" stroke-width="1.2" stroke-opacity="0.85"/><polygon points="1063.5,280 1912,280 1912,283.7 1068.5,283.7 1063.5,287.5" fill="#d3d3d3"/><polygon points="1063.5,289 1912,289 1912,292.7 1068.5,292.7 1063.5,296.8" fill="#000"/><polygon points="1063.3,303 1250.7,303 1250.7,310.5 1245.7,306.7 1068.3,306.7 1063.3,310.5" fill="#d3d3d3"/><polygon points="1063.3,312 1244.7,312 1244.7,319.8 1239.7,315.7 1068.3,315.7 1063.3,319.8" fill="#000"/><rect x="1063.8" y="326.2" width="20.599999999999955" height="4.8" fill="#d6d6d6" stroke="#8e8e8e" stroke-width="1.2"/><rect x="1063.2" y="335" width="20.0" height="10" fill="#26c58f"/><rect x="1063.2" y="335" width="20.0" height="10" fill="#0a74e2"/><path d="M1063.2 344.6H1082.6000000000001V335.5" fill="none" stroke="#1f2a36" stroke-width="1.2" stroke-opacity="0.85"/><rect x="1094.0" y="349.2" width="20.199999999999864" height="4.8" fill="#d6d6d6" stroke="#8e8e8e" stroke-width="1.2"/><rect x="1093.4" y="358" width="75.79999999999995" height="10" fill="#26c58f"/><rect x="1093.4" y="358" width="75.79999999999995" height="10" fill="#0a74e2"/><path d="M1093.4 367.6H1168.6000000000001V358.5" fill="none" stroke="#1f2a36" stroke-width="1.2" stroke-opacity="0.85"/><rect x="1124.1999999999998" y="372.2" width="19.8" height="4.8" fill="#d6d6d6" stroke="#8e8e8e" stroke-width="1.2"/><rect x="1123.6" y="381" width="19.800000000000182" height="10" fill="#26c58f"/><rect x="1123.6" y="381" width="19.800000000000182" height="10" fill="#0a74e2"/><path d="M1123.6 390.6H1142.8000000000002V381.5" fill="none" stroke="#1f2a36" stroke-width="1.2" stroke-opacity="0.85"/><rect x="1154.8" y="395.2" width="19.8" height="4.8" fill="#d6d6d6" stroke="#8e8e8e" stroke-width="1.2"/><rect x="1154.2" y="404" width="19.399999999999864" height="10" fill="#26c58f"/><rect x="1154.2" y="404" width="12.80399999999991" height="10" fill="#0a74e2"/><path d="M1154.2 413.6H1173.0V404.5" fill="none" stroke="#1f2a36" stroke-width="1.2" stroke-opacity="0.85"/><rect x="1185.0" y="418.2" width="65.09999999999995" height="4.8" fill="#d6d6d6" stroke="#8e8e8e" stroke-width="1.2"/><rect x="1184.4" y="427" width="60.19999999999982" height="10" fill="#26c58f"/><rect x="1184.4" y="427" width="47.55799999999986" height="10" fill="#0a74e2"/><path d="M1184.4 436.6H1244.0V427.5" fill="none" stroke="#1f2a36" stroke-width="1.2" stroke-opacity="0.85"/><polygon points="1259.9,441 1417.2,441 1417.2,448.5 1412.2,444.7 1264.9,444.7 1259.9,448.5" fill="#d3d3d3"/><polygon points="1259.9,450 1417.2,450 1417.2,457.8 1412.2,453.7 1264.9,453.7 1259.9,457.8" fill="#000"/><rect x="1260.5" y="464.2" width="19.699999999999864" height="4.8" fill="#d6d6d6" stroke="#8e8e8e" stroke-width="1.2"/><rect x="1259.9" y="473" width="20.899999999999864" height="10" fill="#26c58f"/><rect x="1259.9" y="473" width="4.806999999999968" height="10" fill="#0a74e2"/><path d="M1259.9 482.6H1280.2V473.5" fill="none" stroke="#1f2a36" stroke-width="1.2" stroke-opacity="0.85"/><rect x="1290.8" y="487.2" width="65.3999999999999" height="4.8" fill="#d6d6d6" stroke="#8e8e8e" stroke-width="1.2"/><rect x="1290.2" y="496" width="66.59999999999991" height="10" fill="#26c58f"/><rect x="1290.2" y="496" width="16.649999999999977" height="10" fill="#0a74e2"/><path d="M1290.2 505.6H1356.2V496.5" fill="none" stroke="#1f2a36" stroke-width="1.2" stroke-opacity="0.85"/><rect x="1397.0" y="510.2" width="19.8" height="4.8" fill="#d6d6d6" stroke="#8e8e8e" stroke-width="1.2"/><rect x="1396.4" y="519" width="21.0" height="10" fill="#26c58f"/><rect x="1396.4" y="519" width="2.52" height="10" fill="#0a74e2"/><path d="M1396.4 528.6H1416.8000000000002V519.5" fill="none" stroke="#1f2a36" stroke-width="1.2" stroke-opacity="0.85"/><polygon points="1366.4,533 1780.4,533 1780.4,540.5 1775.4,536.7 1371.4,536.7 1366.4,540.5" fill="#d3d3d3"/><polygon points="1366.4,542 1765.6,542 1765.6,549.8 1760.6,545.7 1371.4,545.7 1366.4,549.8" fill="#000"/><rect x="1367.0" y="556.2" width="19.599999999999955" height="4.8" fill="#d6d6d6" stroke="#8e8e8e" stroke-width="1.2"/><rect x="1366.4" y="565" width="16.199999999999818" height="10" fill="#26c58f"/><rect x="1366.4" y="565" width="1.619999999999982" height="10" fill="#0a74e2"/><path d="M1366.4 574.6H1382.0V565.5" fill="none" stroke="#1f2a36" stroke-width="1.2" stroke-opacity="0.85"/><rect x="1367.0" y="579.2" width="19.599999999999955" height="4.8" fill="#d6d6d6" stroke="#8e8e8e" stroke-width="1.2"/><rect x="1366.4" y="588" width="20.799999999999955" height="10" fill="#26c58f"/><rect x="1366.4" y="588" width="11.647999999999975" height="10" fill="#0a74e2"/><path d="M1366.4 597.6H1386.6000000000001V588.5" fill="none" stroke="#1f2a36" stroke-width="1.2" stroke-opacity="0.85"/><path d="M993.6 230V231.5H992.8V248H1000.2" fill="none" stroke="#000" stroke-width="1.6" stroke-linejoin="round"/><polygon points="998.7,244 1006.2,248 998.7,252" fill="#000"/><path d="M1023.7 253V254.5H1019.3V271H1027.1" fill="none" stroke="#000" stroke-width="1.6" stroke-linejoin="round"/><polygon points="1025.6,267 1033.1,271 1025.6,275" fill="#000"/><path d="M1053.8 276V277.5H1049.5V340H1057.2" fill="none" stroke="#000" stroke-width="1.6" stroke-linejoin="round"/><polygon points="1055.7,336 1063.2,340 1055.7,344" fill="#000"/><path d="M1083.2 345V346.5H1079.6V363H1087.4" fill="none" stroke="#000" stroke-width="1.6" stroke-linejoin="round"/><polygon points="1085.9,359 1093.4,363 1085.9,367" fill="#000"/><path d="M1169.2 368V369.5H1109.6V386H1117.6" fill="none" stroke="#000" stroke-width="1.6" stroke-linejoin="round"/><polygon points="1116.1,382 1123.6,386 1116.1,390" fill="#000"/><path d="M1143.4 391V392.5H1140V409H1148.2" fill="none" stroke="#000" stroke-width="1.6" stroke-linejoin="round"/><polygon points="1146.7,405 1154.2,409 1146.7,413" fill="#000"/><path d="M1173.6 414V415.5H1170.1V432H1178.4" fill="none" stroke="#000" stroke-width="1.6" stroke-linejoin="round"/><polygon points="1176.9,428 1184.4,432 1176.9,436" fill="#000"/><path d="M1244.6 437V438.5H1245.3V478H1253.9" fill="none" stroke="#000" stroke-width="1.6" stroke-linejoin="round"/><polygon points="1252.4,474 1259.9,478 1252.4,482" fill="#000"/><path d="M1280.8 483V484.5H1276.5V501H1284.2" fill="none" stroke="#000" stroke-width="1.6" stroke-linejoin="round"/><polygon points="1282.7,497 1290.2,501 1282.7,505" fill="#000"/><path d="M1356.8 506V507.5H1352V570H1360.4" fill="none" stroke="#000" stroke-width="1.6" stroke-linejoin="round"/><polygon points="1358.9,566 1366.4,570 1358.9,574" fill="#000"/><path d="M1382.6 575V576.5H1352V593H1360.4" fill="none" stroke="#000" stroke-width="1.6" stroke-linejoin="round"/><polygon points="1358.9,589 1366.4,593 1358.9,597" fill="#000"/><path d="M1382.6 575V576.5H1382.3V524H1390.4" fill="none" stroke="#000" stroke-width="1.6" stroke-linejoin="round"/><polygon points="1388.9,520 1396.4,524 1388.9,528" fill="#000"/><path d="M1417.4 524H1426" stroke="#000" stroke-width="1.6"/><polygon points="1423,520 1430,524 1423,528" fill="#000"/><path d="M1431 519.5V528.5" stroke="#000" stroke-width="1.6"/><line x1="1224" y1="145" x2="1224" y2="599" stroke="#1a78e0" stroke-width="2" stroke-dasharray="5 3"/><path d="M1219.8 140.2H1228.2V142.5L1224 146.5L1219.8 142.5Z" fill="#1a78e0"/><line x1="1280.5" y1="145" x2="1280.5" y2="599" stroke="#f0406a" stroke-width="2" stroke-dasharray="5 3"/><path d="M1276.3 140.2H1284.7V142.5L1280.5 146.5L1276.3 142.5Z" fill="#f0406a"/></g></svg>
<div style="position:absolute;left:1229px;top:141px;width:10px;height:80px;overflow:visible"><div style="position:absolute;left:0;top:0;transform-origin:0 0;transform:translate(10px,0) rotate(90deg);font-size:11.3px;line-height:10px;color:#9a9aa0;white-space:nowrap">Текущая дата</div></div>
<div style="position:absolute;left:1285px;top:141px;width:10px;height:80px;overflow:visible"><div style="position:absolute;left:0;top:0;transform-origin:0 0;transform:translate(10px,0) rotate(90deg);font-size:11.3px;letter-spacing:0.2px;line-height:10px;color:#9a9aa0;white-space:nowrap">Дата актуализации</div></div>
<div style="position:absolute;left:1074.2px;top:194.5px;white-space:nowrap;font-size:12px;font-weight:bold;color:#444;line-height:16px;letter-spacing:-0.1px">Земляные работы</div>
<div style="position:absolute;left:1014.3px;top:217.5px;white-space:nowrap;font-size:13px;color:#6e6e74;line-height:16px">Вертикальная планировка территории</div>
<div style="position:absolute;left:1044.3px;top:240.5px;white-space:nowrap;font-size:13px;color:#6e6e74;line-height:16px">Устройство котлована</div>
<div style="position:absolute;left:1074.7px;top:263.5px;white-space:nowrap;font-size:13px;color:#6e6e74;line-height:16px">Устройство песчаного основания</div>
<div style="position:absolute;left:1265px;top:309.5px;white-space:nowrap;font-size:12px;font-weight:bold;color:#444;line-height:16px;letter-spacing:-0.1px">Фундамент</div>
<div style="position:absolute;left:1103.8px;top:332.5px;white-space:nowrap;font-size:13px;color:#6e6e74;line-height:16px">Устройство буронабивных свай захватка 1</div>
<div style="position:absolute;left:1189.9px;top:355.5px;white-space:nowrap;font-size:13px;color:#6e6e74;line-height:16px">Устройство буронабивных свай захватка 2</div>
<div style="position:absolute;left:1164.2px;top:378.5px;white-space:nowrap;font-size:13px;color:#6e6e74;line-height:16px">Устройство буронабивных свай захватка 3</div>
<div style="position:absolute;left:1194.3px;top:401.5px;white-space:nowrap;font-size:13px;color:#6e6e74;line-height:16px">Устройство буронабивных свай захватка 4</div>
<div style="position:absolute;left:1265.5px;top:424.5px;white-space:nowrap;font-size:13px;color:#6e6e74;line-height:16px">Устройство фундаментной плиты</div>
<div style="position:absolute;left:1437px;top:447.5px;white-space:nowrap;font-size:12px;font-weight:bold;color:#444;line-height:16px;letter-spacing:-0.1px">Монолитные работы подземной части</div>
<div style="position:absolute;left:1301.4px;top:470.5px;white-space:nowrap;font-size:13px;color:#6e6e74;line-height:16px">Устройство монолитных стен цокольного этажа</div>
<div style="position:absolute;left:1377.7px;top:493.5px;white-space:nowrap;font-size:13px;color:#6e6e74;line-height:16px">Устройство монолитного перекрытия цокольного этажа</div>
<div style="position:absolute;left:1437.7px;top:516.5px;white-space:nowrap;font-size:13px;color:#6e6e74;line-height:16px">Устройство монолитной входной лестницы</div>
<div style="position:absolute;left:1785.3px;top:539.5px;white-space:nowrap;font-size:12px;font-weight:bold;color:#444;line-height:16px;letter-spacing:-0.1px">Монолитные работы</div>
<div style="position:absolute;left:1403px;top:562.5px;white-space:nowrap;font-size:13px;color:#6e6e74;line-height:16px">Устройство наружных монолитных стен 1-го этажа</div>
<div style="position:absolute;left:1407.5px;top:585.5px;white-space:nowrap;font-size:13px;color:#6e6e74;line-height:16px">Устройство внутренних монолитных стен 1-го этажа</div>
<svg style="position:absolute;left:1870px;top:513px" width="38" height="72" viewBox="0 0 38 72" fill="none" stroke="#9c9ca4" stroke-width="1.5"><circle cx="18.8" cy="18.2" r="12"/><path d="M18.8 10.5v15.5M11 18.2h15.5" stroke="#808088"/><circle cx="18.8" cy="52.2" r="12"/><path d="M11 52.2h15.5" stroke="#808088"/></svg>
<div style="position:absolute;left:45px;top:599px;width:1873px;height:5.5px;background:#b4b4bc"></div>
<div style="position:absolute;left:45px;top:604.5px;width:1873px;height:52.5px;background:#fff"></div>
<div style="position:absolute;left:45px;top:656.5px;width:1873px;height:1px;background:#c6c6cc"></div>
<div style="position:absolute;left:90.3px;top:618px;white-space:nowrap;font-size:16px;letter-spacing:0.7px;color:#4a4a4e;line-height:20px">Карточка работы</div>
<div style="position:absolute;left:318px;top:618px;white-space:nowrap;font-size:16px;letter-spacing:0.7px;color:#4a4a4e;line-height:20px">Связи работы</div>
<div style="position:absolute;left:519.6px;top:618px;white-space:nowrap;font-size:16px;letter-spacing:0.7px;color:#4a4a4e;line-height:20px">Связанные графики</div>
<div style="position:absolute;left:771px;top:618px;white-space:nowrap;font-size:16px;letter-spacing:0.7px;color:#4a4a4e;line-height:20px">Справочники</div>
<div style="position:absolute;left:968px;top:618px;white-space:nowrap;font-size:16px;letter-spacing:0.7px;color:#2a7fd4;line-height:20px">Ресурсное планирование</div>
<div style="position:absolute;left:1264px;top:618px;white-space:nowrap;font-size:16px;letter-spacing:0.7px;color:#4a4a4e;line-height:20px">Чек-листы</div>
<div style="position:absolute;left:1437px;top:618px;white-space:nowrap;font-size:16px;letter-spacing:0.7px;color:#4a4a4e;line-height:20px">Фото / Документация</div>
<div style="position:absolute;left:1702px;top:618px;white-space:nowrap;font-size:16px;letter-spacing:0.7px;color:#4a4a4e;line-height:20px">Запросы и поручения</div>
<div style="position:absolute;left:923px;top:646.5px;width:296px;height:2.5px;background:#1f78d1"></div>
<div style="position:absolute;left:45px;top:657.5px;width:1873px;height:43px;background:#f0f0f3"></div>
<div style="position:absolute;left:45px;top:700px;width:1873px;height:1px;background:#c6c6cc"></div>
<div style="position:absolute;left:93.5px;top:657.5px;width:1px;height:43px;background:#c6c6cc"></div>
<div style="position:absolute;left:194.4px;top:657.5px;width:1px;height:43px;background:#c6c6cc"></div>
<div style="position:absolute;left:440px;top:657.5px;width:1px;height:43px;background:#c6c6cc"></div>
<div style="position:absolute;left:295.5px;top:658px;width:44px;height:42px;background:#e2e2e6"></div>
<svg style="position:absolute;left:54.0px;top:668.0px;overflow:visible" width="24" height="24" viewBox="0 0 24 24" fill="none" stroke="#4a4a52" stroke-width="2.1" stroke-linecap="round" stroke-linejoin="round" color="#4a4a52"><path d="M1.5 2.5h21l-7.8 9.5v10l-5.4-2.5V12z"/></svg>
<svg style="position:absolute;left:108.0px;top:668.0px;overflow:visible" width="24" height="24" viewBox="0 0 24 24" fill="none" stroke="#4a4a52" stroke-width="2.1" stroke-linecap="round" stroke-linejoin="round" color="#4a4a52"><path d="M15.5 7.2l1.8 1.8 4.8-4.2a6.2 6.2 0 0 1-8 7.6L4 22.2a2.2 2.2 0 0 1-3.1-3.1L10.7 9.3a6.2 6.2 0 0 1 7.6-8z"/></svg>
<svg style="position:absolute;left:156.0px;top:668.0px;overflow:visible" width="24" height="24" viewBox="0 0 24 24" fill="none" stroke="#4a4a52" stroke-width="2.1" stroke-linecap="round" stroke-linejoin="round" color="#4a4a52"><rect x="2" y="3.5" width="20" height="19.5" rx="2.5"/><path d="M2 8h20M7 1v4M17 1v4M7 8v15M12 8v15M17 8v15"/></svg>
<svg style="position:absolute;left:209.0px;top:668.0px;overflow:visible" width="24" height="24" viewBox="0 0 24 24" fill="none" stroke="#c8c8cd" stroke-width="2.1" stroke-linecap="round" stroke-linejoin="round" color="#c8c8cd"><rect x="2" y="3.5" width="20" height="19.5" rx="2.5"/><path d="M2 8h20M7 1v4M17 1v4M6.5 11.5v8"/><path d="M17 11.5v8l-7-4z" fill="#c8c8cd"/></svg>
<svg style="position:absolute;left:257.0px;top:668.0px;overflow:visible" width="24" height="24" viewBox="0 0 24 24" fill="none" stroke="#4a4a52" stroke-width="2.1" stroke-linecap="round" stroke-linejoin="round" color="#4a4a52"><rect x="2" y="3.5" width="20" height="19.5" rx="2.5"/><path d="M2 8h20M7 1v4M17 1v4M6.5 11.5v8"/><path d="M11 11.5v8l7-4z" fill="#4a4a52"/></svg>
<svg style="position:absolute;left:305.0px;top:668.0px;overflow:visible" width="24" height="24" viewBox="0 0 24 24" fill="none" stroke="#4a4a52" stroke-width="2.1" stroke-linecap="round" stroke-linejoin="round" color="#4a4a52"><rect x="2" y="3.5" width="20" height="19.5" rx="2.5"/><path d="M2 8h20M7 1v4M17 1v4"/><path d="M15 12.5c-.6-.8-1.6-1.2-2.8-1.2-1.5 0-2.7.8-2.7 2 0 2.8 5.6 1.6 5.6 4.2 0 1.3-1.2 2.1-2.9 2.1-1.3 0-2.3-.5-2.9-1.3" stroke-width="2"/></svg>
<svg style="position:absolute;left:353.0px;top:668.0px;overflow:visible" width="24" height="24" viewBox="0 0 24 24" fill="none" stroke="#4a4a52" stroke-width="2.1" stroke-linecap="round" stroke-linejoin="round" color="#4a4a52"><rect x="2" y="3.5" width="20" height="19.5" rx="2.5"/><path d="M2 8h20M7 1v4M17 1v4"/><path d="M9.5 11.5v8.5h2.3a4.25 4.25 0 0 0 0-8.5z" stroke-width="2"/></svg>
<svg style="position:absolute;left:401.0px;top:668.0px;overflow:visible" width="24" height="24" viewBox="0 0 24 24" fill="none" stroke="#4a4a52" stroke-width="2.1" stroke-linecap="round" stroke-linejoin="round" color="#4a4a52"><rect x="2" y="3.5" width="20" height="19.5" rx="2.5"/><path d="M2 8h20M7 1v4M17 1v4"/><path d="M15 11.5H9.8V20M9.8 15.5h4.5" stroke-width="2"/></svg>
<svg style="position:absolute;left:454.0px;top:668.0px;overflow:visible" width="24" height="24" viewBox="0 0 24 24" fill="none" stroke="#4a4a52" stroke-width="2.1" stroke-linecap="round" stroke-linejoin="round" color="#4a4a52"><circle cx="12" cy="12" r="10.5"/><path d="M5.5 12.5l2.5 2.5 5-5M11 14.5l.5.5 6-6" stroke-width="1.9"/></svg>
<svg style="position:absolute;left:502.6px;top:668.0px;overflow:visible" width="24" height="24" viewBox="0 0 24 24" fill="none" stroke="#4a4a52" stroke-width="2.1" stroke-linecap="round" stroke-linejoin="round" color="#4a4a52"><circle cx="12" cy="12" r="10.5"/><path d="M7.5 12.5l3 3 6-6"/></svg>
<svg style="position:absolute;left:550.3px;top:668.0px;overflow:visible" width="24" height="24" viewBox="0 0 24 24" fill="none" stroke="#4a4a52" stroke-width="2.1" stroke-linecap="round" stroke-linejoin="round" color="#4a4a52"><circle cx="12" cy="12" r="10.5"/><path d="M8 8l8 8M16 8l-8 8"/></svg>
<div style="position:absolute;left:71px;top:690px;width:0;height:0;border-left:3.0px solid transparent;border-right:3.0px solid transparent;border-top:3.0px solid #4a4a52"></div>
<div style="position:absolute;left:125px;top:690px;width:0;height:0;border-left:3.0px solid transparent;border-right:3.0px solid transparent;border-top:3.0px solid #4a4a52"></div>
<div style="position:absolute;left:45px;top:701px;width:1873px;height:25px;background:#f0f0f3"></div>
<div style="position:absolute;left:45px;top:725.5px;width:1873px;height:1px;background:#c8c8cf"></div>
<div style="position:absolute;left:45px;top:726.5px;width:1873px;height:24px;background:#f0f0f3"></div>
<div style="position:absolute;left:45px;top:750px;width:1873px;height:1px;background:#c8c8cf"></div>
<div style="position:absolute;left:45px;top:751px;width:801px;height:131px;background:#fff"></div>
<div style="position:absolute;left:845.6px;top:751px;width:1072.4px;height:131px;background:#c6dcf1"></div>
<div style="position:absolute;left:45px;top:882px;width:1873px;height:20px;background:#fff"></div>
<div style="position:absolute;left:45px;top:794px;width:801px;height:1px;background:#c8c8cf"></div>
<div style="position:absolute;left:45px;top:838px;width:801px;height:1px;background:#c8c8cf"></div>
<div style="position:absolute;left:45px;top:882px;width:801px;height:1px;background:#c8c8cf"></div>
<div style="position:absolute;left:846px;top:794px;width:1072px;height:1px;background:repeating-linear-gradient(90deg,#b5adb3 0 3px,transparent 3px 5px)"></div>
<div style="position:absolute;left:846px;top:838px;width:1072px;height:1px;background:repeating-linear-gradient(90deg,#b5adb3 0 3px,transparent 3px 5px)"></div>
<div style="position:absolute;left:846px;top:882px;width:1072px;height:1px;background:repeating-linear-gradient(90deg,#b5adb3 0 3px,transparent 3px 5px)"></div>
<div style="position:absolute;left:184px;top:726px;width:1px;height:156px;background:#c8c8cf"></div>
<div style="position:absolute;left:304px;top:726px;width:1px;height:156px;background:#c8c8cf"></div>
<div style="position:absolute;left:424.5px;top:726px;width:1px;height:156px;background:#c8c8cf"></div>
<div style="position:absolute;left:525px;top:726px;width:1px;height:156px;background:#c8c8cf"></div>
<div style="position:absolute;left:625px;top:726px;width:1px;height:156px;background:#c8c8cf"></div>
<div style="position:absolute;left:745px;top:726px;width:1px;height:156px;background:#c8c8cf"></div>
<div style="position:absolute;left:845.6px;top:726px;width:1px;height:176px;background:#c0c0c8"></div>
<div style="position:absolute;left:45px;top:727px;width:139.5px;white-space:nowrap;font-size:11.6px;color:#1a1a1a;line-height:24px;text-align:center">Тип</div>
<div style="position:absolute;left:184.5px;top:727px;width:120.0px;white-space:nowrap;font-size:11.6px;color:#1a1a1a;line-height:24px;text-align:center">Наименование</div>
<div style="position:absolute;left:304.5px;top:727px;width:120.5px;white-space:nowrap;font-size:11.6px;color:#1a1a1a;line-height:24px;text-align:center">План</div>
<div style="position:absolute;left:425px;top:727px;width:100px;white-space:nowrap;font-size:11.6px;color:#1a1a1a;line-height:24px;text-align:center">Факт</div>
<div style="position:absolute;left:525px;top:727px;width:100px;white-space:nowrap;font-size:11.6px;color:#1a1a1a;line-height:24px;text-align:center">Остаток</div>
<div style="position:absolute;left:625px;top:727px;width:120.39999999999998px;white-space:nowrap;font-size:11.6px;color:#1a1a1a;line-height:24px;text-align:center">Нераспределенн...</div>
<div style="position:absolute;left:745.4px;top:727px;width:100.20000000000005px;white-space:nowrap;font-size:11.6px;color:#1a1a1a;line-height:24px;text-align:center">Долг</div>
<div style="position:absolute;left:845.6px;top:700.5px;width:350px;white-space:nowrap;font-size:11.6px;color:#1a1a1a;line-height:24px;text-align:center;line-height:25px">17.10.2025</div>
<div style="position:absolute;left:845.6px;top:727px;width:70px;white-space:nowrap;font-size:11.6px;color:#1a1a1a;line-height:24px;text-align:center">Согл.план</div>
<div style="position:absolute;left:847.6px;top:752px;width:70px;white-space:nowrap;font-size:12.4px;color:#85858c;line-height:43px;text-align:center">5</div>
<div style="position:absolute;left:847.6px;top:796px;width:70px;white-space:nowrap;font-size:12.4px;color:#85858c;line-height:43px;text-align:center">25</div>
<div style="position:absolute;left:847.6px;top:840px;width:70px;white-space:nowrap;font-size:12.4px;color:#85858c;line-height:43px;text-align:center">19 125</div>
<div style="position:absolute;left:915.6px;top:726px;width:1px;height:156px;background:repeating-linear-gradient(180deg,#b5adb3 0 3px,transparent 3px 5px)"></div>
<div style="position:absolute;left:915.6px;top:727px;width:70px;white-space:nowrap;font-size:11.6px;color:#1a1a1a;line-height:24px;text-align:center">Опер.план</div>
<div style="position:absolute;left:917.6px;top:752px;width:70px;white-space:nowrap;font-size:12.4px;color:#85858c;line-height:43px;text-align:center">5</div>
<div style="position:absolute;left:917.6px;top:796px;width:70px;white-space:nowrap;font-size:12.4px;color:#85858c;line-height:43px;text-align:center">25</div>
<div style="position:absolute;left:917.6px;top:840px;width:70px;white-space:nowrap;font-size:12.4px;color:#85858c;line-height:43px;text-align:center">19 125</div>
<div style="position:absolute;left:985.6px;top:726px;width:1px;height:156px;background:repeating-linear-gradient(180deg,#b5adb3 0 3px,transparent 3px 5px)"></div>
<div style="position:absolute;left:985.6px;top:727px;width:70px;white-space:nowrap;font-size:11.6px;color:#1a1a1a;line-height:24px;text-align:center">Факт</div>
<svg style="position:absolute;left:986.1px;top:751px" width="20" height="19"><polygon points="0,0 19.5,0 0,18.5" fill="#77ca96"/></svg>
<div style="position:absolute;left:987.6px;top:752px;width:70px;white-space:nowrap;font-size:12.4px;color:#5fc085;line-height:43px;text-align:center">5</div>
<svg style="position:absolute;left:986.1px;top:795px" width="20" height="19"><polygon points="0,0 19.5,0 0,18.5" fill="#77ca96"/></svg>
<div style="position:absolute;left:987.6px;top:796px;width:70px;white-space:nowrap;font-size:12.4px;color:#5fc085;line-height:43px;text-align:center">25</div>
<svg style="position:absolute;left:986.1px;top:839px" width="20" height="19"><polygon points="0,0 19.5,0 0,18.5" fill="#77ca96"/></svg>
<div style="position:absolute;left:987.6px;top:840px;width:70px;white-space:nowrap;font-size:12.4px;color:#5fc085;line-height:43px;text-align:center">19 125</div>
<div style="position:absolute;left:1055.6px;top:726px;width:1px;height:156px;background:repeating-linear-gradient(180deg,#b5adb3 0 3px,transparent 3px 5px)"></div>
<div style="position:absolute;left:1055.6px;top:727px;width:70px;white-space:nowrap;font-size:11.6px;color:#1a1a1a;line-height:24px;text-align:center">Уд. трудоз...</div>
<div style="position:absolute;left:1057.6px;top:752px;width:70px;white-space:nowrap;font-size:12.4px;color:#85858c;line-height:43px;text-align:center">6</div>
<div style="position:absolute;left:1057.6px;top:796px;width:70px;white-space:nowrap;font-size:12.4px;color:#85858c;line-height:43px;text-align:center">6</div>
<div style="position:absolute;left:1057.6px;top:840px;width:70px;white-space:nowrap;font-size:12.4px;color:#85858c;line-height:43px;text-align:center">6</div>
<div style="position:absolute;left:1125.6px;top:726px;width:1px;height:156px;background:repeating-linear-gradient(180deg,#b5adb3 0 3px,transparent 3px 5px)"></div>
<div style="position:absolute;left:1125.6px;top:727px;width:70px;white-space:nowrap;font-size:11.6px;color:#1a1a1a;line-height:24px;text-align:center">Ставка</div>
<div style="position:absolute;left:1127.6px;top:752px;width:70px;white-space:nowrap;font-size:12.4px;color:#85858c;line-height:43px;text-align:center">4 590</div>
<div style="position:absolute;left:1127.6px;top:796px;width:70px;white-space:nowrap;font-size:12.4px;color:#85858c;line-height:43px;text-align:center">4 590</div>
<div style="position:absolute;left:1127.6px;top:840px;width:70px;white-space:nowrap;font-size:12.4px;color:#85858c;line-height:43px;text-align:center">4 590</div>
<div style="position:absolute;left:1195.6px;top:701px;width:1px;height:181px;background:#a9a9b0"></div>
<div style="position:absolute;left:1195.6px;top:700.5px;width:350px;white-space:nowrap;font-size:11.6px;color:#1a1a1a;line-height:24px;text-align:center;line-height:25px">18.10.2025</div>
<div style="position:absolute;left:1195.6px;top:727px;width:70px;white-space:nowrap;font-size:11.6px;color:#1a1a1a;line-height:24px;text-align:center">Согл.план</div>
<div style="position:absolute;left:1197.6px;top:752px;width:70px;white-space:nowrap;font-size:12.4px;color:#85858c;line-height:43px;text-align:center">5</div>
<div style="position:absolute;left:1197.6px;top:796px;width:70px;white-space:nowrap;font-size:12.4px;color:#85858c;line-height:43px;text-align:center">25</div>
<div style="position:absolute;left:1197.6px;top:840px;width:70px;white-space:nowrap;font-size:12.4px;color:#85858c;line-height:43px;text-align:center">19 125</div>
<div style="position:absolute;left:1265.6px;top:726px;width:1px;height:156px;background:repeating-linear-gradient(180deg,#b5adb3 0 3px,transparent 3px 5px)"></div>
<div style="position:absolute;left:1265.6px;top:727px;width:70px;white-space:nowrap;font-size:11.6px;color:#1a1a1a;line-height:24px;text-align:center">Опер.план</div>
<div style="position:absolute;left:1267.6px;top:752px;width:70px;white-space:nowrap;font-size:12.4px;color:#85858c;line-height:43px;text-align:center">5</div>
<div style="position:absolute;left:1267.6px;top:796px;width:70px;white-space:nowrap;font-size:12.4px;color:#85858c;line-height:43px;text-align:center">25</div>
<div style="position:absolute;left:1267.6px;top:840px;width:70px;white-space:nowrap;font-size:12.4px;color:#85858c;line-height:43px;text-align:center">19 125</div>
<div style="position:absolute;left:1335.6px;top:726px;width:1px;height:156px;background:repeating-linear-gradient(180deg,#b5adb3 0 3px,transparent 3px 5px)"></div>
<div style="position:absolute;left:1335.6px;top:727px;width:70px;white-space:nowrap;font-size:11.6px;color:#1a1a1a;line-height:24px;text-align:center">Факт</div>
<svg style="position:absolute;left:1336.1px;top:751px" width="20" height="19"><polygon points="0,0 19.5,0 0,18.5" fill="#77ca96"/></svg>
<div style="position:absolute;left:1337.6px;top:752px;width:70px;white-space:nowrap;font-size:12.4px;color:#5fc085;line-height:43px;text-align:center">5</div>
<svg style="position:absolute;left:1336.1px;top:795px" width="20" height="19"><polygon points="0,0 19.5,0 0,18.5" fill="#77ca96"/></svg>
<div style="position:absolute;left:1337.6px;top:796px;width:70px;white-space:nowrap;font-size:12.4px;color:#5fc085;line-height:43px;text-align:center">25</div>
<svg style="position:absolute;left:1336.1px;top:839px" width="20" height="19"><polygon points="0,0 19.5,0 0,18.5" fill="#77ca96"/></svg>
<div style="position:absolute;left:1337.6px;top:840px;width:70px;white-space:nowrap;font-size:12.4px;color:#5fc085;line-height:43px;text-align:center">19 125</div>
<div style="position:absolute;left:1405.6px;top:726px;width:1px;height:156px;background:repeating-linear-gradient(180deg,#b5adb3 0 3px,transparent 3px 5px)"></div>
<div style="position:absolute;left:1405.6px;top:727px;width:70px;white-space:nowrap;font-size:11.6px;color:#1a1a1a;line-height:24px;text-align:center">Уд. трудоз...</div>
<div style="position:absolute;left:1407.6px;top:752px;width:70px;white-space:nowrap;font-size:12.4px;color:#85858c;line-height:43px;text-align:center">6</div>
<div style="position:absolute;left:1407.6px;top:796px;width:70px;white-space:nowrap;font-size:12.4px;color:#85858c;line-height:43px;text-align:center">6</div>
<div style="position:absolute;left:1407.6px;top:840px;width:70px;white-space:nowrap;font-size:12.4px;color:#85858c;line-height:43px;text-align:center">6</div>
<div style="position:absolute;left:1475.6px;top:726px;width:1px;height:156px;background:repeating-linear-gradient(180deg,#b5adb3 0 3px,transparent 3px 5px)"></div>
<div style="position:absolute;left:1475.6px;top:727px;width:70px;white-space:nowrap;font-size:11.6px;color:#1a1a1a;line-height:24px;text-align:center">Ставка</div>
<div style="position:absolute;left:1477.6px;top:752px;width:70px;white-space:nowrap;font-size:12.4px;color:#85858c;line-height:43px;text-align:center">4 590</div>
<div style="position:absolute;left:1477.6px;top:796px;width:70px;white-space:nowrap;font-size:12.4px;color:#85858c;line-height:43px;text-align:center">4 590</div>
<div style="position:absolute;left:1477.6px;top:840px;width:70px;white-space:nowrap;font-size:12.4px;color:#85858c;line-height:43px;text-align:center">4 590</div>
<div style="position:absolute;left:1545.6px;top:701px;width:1px;height:181px;background:#a9a9b0"></div>
<div style="position:absolute;left:1545.6px;top:700.5px;width:350px;white-space:nowrap;font-size:11.6px;color:#1a1a1a;line-height:24px;text-align:center;line-height:25px">19.10.2025</div>
<div style="position:absolute;left:1545.6px;top:727px;width:70px;white-space:nowrap;font-size:11.6px;color:#1a1a1a;line-height:24px;text-align:center">Согл.план</div>
<div style="position:absolute;left:1547.6px;top:752px;width:70px;white-space:nowrap;font-size:12.4px;color:#85858c;line-height:43px;text-align:center">5</div>
<div style="position:absolute;left:1547.6px;top:796px;width:70px;white-space:nowrap;font-size:12.4px;color:#85858c;line-height:43px;text-align:center">25</div>
<div style="position:absolute;left:1547.6px;top:840px;width:70px;white-space:nowrap;font-size:12.4px;color:#85858c;line-height:43px;text-align:center">19 125</div>
<div style="position:absolute;left:1615.6px;top:726px;width:1px;height:156px;background:repeating-linear-gradient(180deg,#b5adb3 0 3px,transparent 3px 5px)"></div>
<div style="position:absolute;left:1615.6px;top:727px;width:70px;white-space:nowrap;font-size:11.6px;color:#1a1a1a;line-height:24px;text-align:center">Опер.план</div>
<div style="position:absolute;left:1617.6px;top:752px;width:70px;white-space:nowrap;font-size:12.4px;color:#85858c;line-height:43px;text-align:center">5</div>
<div style="position:absolute;left:1617.6px;top:796px;width:70px;white-space:nowrap;font-size:12.4px;color:#85858c;line-height:43px;text-align:center">25</div>
<div style="position:absolute;left:1617.6px;top:840px;width:70px;white-space:nowrap;font-size:12.4px;color:#85858c;line-height:43px;text-align:center">19 125</div>
<div style="position:absolute;left:1685.6px;top:726px;width:1px;height:156px;background:repeating-linear-gradient(180deg,#b5adb3 0 3px,transparent 3px 5px)"></div>
<div style="position:absolute;left:1685.6px;top:727px;width:70px;white-space:nowrap;font-size:11.6px;color:#1a1a1a;line-height:24px;text-align:center">Факт</div>
<svg style="position:absolute;left:1686.1px;top:751px" width="20" height="19"><polygon points="0,0 19.5,0 0,18.5" fill="#77ca96"/></svg>
<div style="position:absolute;left:1687.6px;top:752px;width:70px;white-space:nowrap;font-size:12.4px;color:#5fc085;line-height:43px;text-align:center">5</div>
<svg style="position:absolute;left:1686.1px;top:795px" width="20" height="19"><polygon points="0,0 19.5,0 0,18.5" fill="#77ca96"/></svg>
<div style="position:absolute;left:1687.6px;top:796px;width:70px;white-space:nowrap;font-size:12.4px;color:#5fc085;line-height:43px;text-align:center">25</div>
<svg style="position:absolute;left:1686.1px;top:839px" width="20" height="19"><polygon points="0,0 19.5,0 0,18.5" fill="#77ca96"/></svg>
<div style="position:absolute;left:1687.6px;top:840px;width:70px;white-space:nowrap;font-size:12.4px;color:#5fc085;line-height:43px;text-align:center">19 125</div>
<div style="position:absolute;left:1755.6px;top:726px;width:1px;height:156px;background:repeating-linear-gradient(180deg,#b5adb3 0 3px,transparent 3px 5px)"></div>
<div style="position:absolute;left:1755.6px;top:727px;width:70px;white-space:nowrap;font-size:11.6px;color:#1a1a1a;line-height:24px;text-align:center">Уд. трудоз...</div>
<div style="position:absolute;left:1757.6px;top:752px;width:70px;white-space:nowrap;font-size:12.4px;color:#85858c;line-height:43px;text-align:center">6</div>
<div style="position:absolute;left:1757.6px;top:796px;width:70px;white-space:nowrap;font-size:12.4px;color:#85858c;line-height:43px;text-align:center">6</div>
<div style="position:absolute;left:1757.6px;top:840px;width:70px;white-space:nowrap;font-size:12.4px;color:#85858c;line-height:43px;text-align:center">6</div>
<div style="position:absolute;left:1825.6px;top:726px;width:1px;height:156px;background:repeating-linear-gradient(180deg,#b5adb3 0 3px,transparent 3px 5px)"></div>
<div style="position:absolute;left:1825.6px;top:727px;width:70px;white-space:nowrap;font-size:11.6px;color:#1a1a1a;line-height:24px;text-align:center">Ставка</div>
<div style="position:absolute;left:1827.6px;top:752px;width:70px;white-space:nowrap;font-size:12.4px;color:#85858c;line-height:43px;text-align:center">4 590</div>
<div style="position:absolute;left:1827.6px;top:796px;width:70px;white-space:nowrap;font-size:12.4px;color:#85858c;line-height:43px;text-align:center">4 590</div>
<div style="position:absolute;left:1827.6px;top:840px;width:70px;white-space:nowrap;font-size:12.4px;color:#85858c;line-height:43px;text-align:center">4 590</div>
<div style="position:absolute;left:1895.6px;top:701px;width:1px;height:181px;background:#a9a9b0"></div>
<div style="position:absolute;left:1895.6px;top:700.5px;width:350px;white-space:nowrap;font-size:11.6px;color:#1a1a1a;line-height:24px;text-align:center;line-height:25px">20.10.2025</div>
<div style="position:absolute;left:1895.6px;top:727px;width:70px;white-space:nowrap;font-size:11.6px;color:#1a1a1a;line-height:24px;text-align:center">Согл.план</div>
<div style="position:absolute;left:1897.6px;top:752px;width:70px;white-space:nowrap;font-size:12.4px;color:#85858c;line-height:43px;text-align:center">5</div>
<div style="position:absolute;left:1897.6px;top:796px;width:70px;white-space:nowrap;font-size:12.4px;color:#85858c;line-height:43px;text-align:center">25</div>
<div style="position:absolute;left:1897.6px;top:840px;width:70px;white-space:nowrap;font-size:12.4px;color:#85858c;line-height:43px;text-align:center">19 125</div>
<div style="position:absolute;left:1965.6px;top:726px;width:1px;height:156px;background:repeating-linear-gradient(180deg,#b5adb3 0 3px,transparent 3px 5px)"></div>
<div style="position:absolute;left:1965.6px;top:727px;width:70px;white-space:nowrap;font-size:11.6px;color:#1a1a1a;line-height:24px;text-align:center">Опер.план</div>
<div style="position:absolute;left:1967.6px;top:752px;width:70px;white-space:nowrap;font-size:12.4px;color:#85858c;line-height:43px;text-align:center">5</div>
<div style="position:absolute;left:1967.6px;top:796px;width:70px;white-space:nowrap;font-size:12.4px;color:#85858c;line-height:43px;text-align:center">25</div>
<div style="position:absolute;left:1967.6px;top:840px;width:70px;white-space:nowrap;font-size:12.4px;color:#85858c;line-height:43px;text-align:center">19 125</div>
<div style="position:absolute;left:2035.6px;top:726px;width:1px;height:156px;background:repeating-linear-gradient(180deg,#b5adb3 0 3px,transparent 3px 5px)"></div>
<div style="position:absolute;left:2035.6px;top:727px;width:70px;white-space:nowrap;font-size:11.6px;color:#1a1a1a;line-height:24px;text-align:center">Факт</div>
<svg style="position:absolute;left:2036.1px;top:751px" width="20" height="19"><polygon points="0,0 19.5,0 0,18.5" fill="#77ca96"/></svg>
<div style="position:absolute;left:2037.6px;top:752px;width:70px;white-space:nowrap;font-size:12.4px;color:#5fc085;line-height:43px;text-align:center">5</div>
<svg style="position:absolute;left:2036.1px;top:795px" width="20" height="19"><polygon points="0,0 19.5,0 0,18.5" fill="#77ca96"/></svg>
<div style="position:absolute;left:2037.6px;top:796px;width:70px;white-space:nowrap;font-size:12.4px;color:#5fc085;line-height:43px;text-align:center">25</div>
<svg style="position:absolute;left:2036.1px;top:839px" width="20" height="19"><polygon points="0,0 19.5,0 0,18.5" fill="#77ca96"/></svg>
<div style="position:absolute;left:2037.6px;top:840px;width:70px;white-space:nowrap;font-size:12.4px;color:#5fc085;line-height:43px;text-align:center">19 125</div>
<div style="position:absolute;left:2105.6px;top:726px;width:1px;height:156px;background:repeating-linear-gradient(180deg,#b5adb3 0 3px,transparent 3px 5px)"></div>
<div style="position:absolute;left:2105.6px;top:727px;width:70px;white-space:nowrap;font-size:11.6px;color:#1a1a1a;line-height:24px;text-align:center">Уд. трудоз...</div>
<div style="position:absolute;left:2107.6px;top:752px;width:70px;white-space:nowrap;font-size:12.4px;color:#85858c;line-height:43px;text-align:center">6</div>
<div style="position:absolute;left:2107.6px;top:796px;width:70px;white-space:nowrap;font-size:12.4px;color:#85858c;line-height:43px;text-align:center">6</div>
<div style="position:absolute;left:2107.6px;top:840px;width:70px;white-space:nowrap;font-size:12.4px;color:#85858c;line-height:43px;text-align:center">6</div>
<div style="position:absolute;left:2175.6px;top:726px;width:1px;height:156px;background:repeating-linear-gradient(180deg,#b5adb3 0 3px,transparent 3px 5px)"></div>
<div style="position:absolute;left:2175.6px;top:727px;width:70px;white-space:nowrap;font-size:11.6px;color:#1a1a1a;line-height:24px;text-align:center">Ставка</div>
<div style="position:absolute;left:2177.6px;top:752px;width:70px;white-space:nowrap;font-size:12.4px;color:#85858c;line-height:43px;text-align:center">4 590</div>
<div style="position:absolute;left:2177.6px;top:796px;width:70px;white-space:nowrap;font-size:12.4px;color:#85858c;line-height:43px;text-align:center">4 590</div>
<div style="position:absolute;left:2177.6px;top:840px;width:70px;white-space:nowrap;font-size:12.4px;color:#85858c;line-height:43px;text-align:center">4 590</div>
<div style="position:absolute;left:1910px;top:726px;width:8px;height:0px;"></div>
<div style="position:absolute;left:80.2px;top:752px;white-space:nowrap;font-size:12.3px;color:#1a1a1a;line-height:43px">Физобъем</div>
<div style="position:absolute;left:195px;top:752px;width:109px;height:43px;overflow:hidden;white-space:nowrap;font-size:12.3px;color:#1a1a1a;line-height:43px">Устройство буронаб</div>
<div style="position:absolute;left:304.5px;top:752px;width:120.5px;white-space:nowrap;font-size:12.3px;color:#1a1a1a;line-height:43px;text-align:center">25</div>
<div style="position:absolute;left:425px;top:752px;width:100px;white-space:nowrap;font-size:12.3px;color:#1a1a1a;line-height:43px;text-align:center">25</div>
<div style="position:absolute;left:525px;top:752px;width:100px;white-space:nowrap;font-size:12.3px;color:#1a1a1a;line-height:43px;text-align:center">0</div>
<div style="position:absolute;left:625px;top:752px;width:120.39999999999998px;white-space:nowrap;font-size:12.3px;color:#1a1a1a;line-height:43px;text-align:center">0</div>
<div style="position:absolute;left:745.4px;top:752px;width:100.20000000000005px;white-space:nowrap;font-size:12.3px;color:#1a1a1a;line-height:43px;text-align:center">0</div>
<div style="position:absolute;left:80.2px;top:796px;white-space:nowrap;font-size:12.3px;color:#1a1a1a;line-height:43px">Трудозатраты</div>
<div style="position:absolute;left:304.5px;top:796px;width:120.5px;white-space:nowrap;font-size:12.3px;color:#1a1a1a;line-height:43px;text-align:center">150</div>
<div style="position:absolute;left:425px;top:796px;width:100px;white-space:nowrap;font-size:12.3px;color:#1a1a1a;line-height:43px;text-align:center">150</div>
<div style="position:absolute;left:525px;top:796px;width:100px;white-space:nowrap;font-size:12.3px;color:#1a1a1a;line-height:43px;text-align:center">0</div>
<div style="position:absolute;left:625px;top:796px;width:120.39999999999998px;white-space:nowrap;font-size:12.3px;color:#1a1a1a;line-height:43px;text-align:center">0</div>
<div style="position:absolute;left:745.4px;top:796px;width:100.20000000000005px;white-space:nowrap;font-size:12.3px;color:#1a1a1a;line-height:43px;text-align:center">0</div>
<div style="position:absolute;left:80.2px;top:840px;white-space:nowrap;font-size:12.3px;color:#1a1a1a;line-height:43px">Стоимость</div>
<div style="position:absolute;left:304.5px;top:840px;width:120.5px;white-space:nowrap;font-size:12.3px;color:#1a1a1a;line-height:43px;text-align:center">114 750</div>
<div style="position:absolute;left:425px;top:840px;width:100px;white-space:nowrap;font-size:12.3px;color:#1a1a1a;line-height:43px;text-align:center">114 750</div>
<div style="position:absolute;left:525px;top:840px;width:100px;white-space:nowrap;font-size:12.3px;color:#1a1a1a;line-height:43px;text-align:center">0</div>
<div style="position:absolute;left:625px;top:840px;width:120.39999999999998px;white-space:nowrap;font-size:12.3px;color:#1a1a1a;line-height:43px;text-align:center">0</div>
<div style="position:absolute;left:745.4px;top:840px;width:100.20000000000005px;white-space:nowrap;font-size:12.3px;color:#1a1a1a;line-height:43px;text-align:center">0</div>
<svg style="position:absolute;left:53px;top:763px" width="20" height="20" viewBox="0 0 20 20" fill="#555" stroke="#555" stroke-linecap="round" stroke-linejoin="round"><circle cx="10.5" cy="2.2" r="1.3" stroke="none"/><path d="M2 6.5l3-2.5 3.5 0.5 1.5 3.5-2 2.5z" stroke-width="1"/><path d="M5 9l-2 8.5M7 9.5l0.8 7.5" stroke-width="1.6" fill="none"/><path d="M8 6l6 9" stroke-width="1.4" fill="none"/><path d="M11.5 17.5l3.5-5 4 5z" stroke-width="1"/></svg>
<svg style="position:absolute;left:53px;top:807px" width="20" height="20" viewBox="0 0 20 20" fill="none" stroke="#555" stroke-width="1.5" stroke-linecap="round"><path d="M6 8.5a4 4 0 0 1 8 0z" fill="#555"/><path d="M10 3.2v1.5M4.8 8.5h10.4"/><path d="M6.8 9.5a3.2 3.2 0 0 0 6.4 0"/><path d="M2.5 18.5c0-3.5 3.3-5.5 7.5-5.5s7.5 2 7.5 5.5"/></svg>
<svg style="position:absolute;left:53px;top:851px" width="20" height="20" viewBox="0 0 20 20" fill="none" stroke="#555" stroke-width="1.3"><ellipse cx="10" cy="3.2" rx="3.8" ry="1.7"/><path d="M6.2 3.2v4.6c0 1 1.7 1.7 3.8 1.7s3.8-.7 3.8-1.7V3.2M6.2 5.5c0 1 1.7 1.7 3.8 1.7s3.8-.7 3.8-1.7"/><ellipse cx="5.6" cy="12" rx="4" ry="1.7"/><path d="M1.6 12v4.6c0 1 1.8 1.7 4 1.7s4-.7 4-1.7V12M1.6 14.3c0 1 1.8 1.7 4 1.7s4-.7 4-1.7"/><ellipse cx="14.4" cy="10.5" rx="4" ry="1.7"/><path d="M10.4 10.5v6.1c0 1 1.8 1.7 4 1.7s4-.7 4-1.7v-6.1M10.4 13c0 1 1.8 1.7 4 1.7s4-.7 4-1.7"/></svg>
<div style="position:absolute;left:45px;top:902px;width:1873px;height:10px;background:#f2f2f5"></div>
<div style="position:absolute;left:296.5px;top:902px;width:34px;height:10px;border-radius:5px 5px 0 0;background:#dcdce0"></div>
<svg style="position:absolute;left:0;top:0" width="1918" height="912"><ellipse cx="244.5" cy="639.5" rx="15.3" ry="16.4" fill="#fff" stroke="#000" stroke-width="3.4"/><path d="M244.5 657V721" stroke="#000" stroke-width="3"/><polygon points="238.0,720 251.0,720 244.5,732" fill="#000"/><text x="244.5" y="647.5" font-family="Liberation Sans" font-size="22" text-anchor="middle" fill="#000">1</text><ellipse cx="368.3" cy="639.5" rx="15.3" ry="16.4" fill="#fff" stroke="#000" stroke-width="3.4"/><path d="M368.3 657V721" stroke="#000" stroke-width="3"/><polygon points="361.8,720 374.8,720 368.3,732" fill="#000"/><text x="368.3" y="647.5" font-family="Liberation Sans" font-size="22" text-anchor="middle" fill="#000">2</text><ellipse cx="475.8" cy="639.5" rx="15.3" ry="16.4" fill="#fff" stroke="#000" stroke-width="3.4"/><path d="M475.8 657V721" stroke="#000" stroke-width="3"/><polygon points="469.3,720 482.3,720 475.8,732" fill="#000"/><text x="475.8" y="647.5" font-family="Liberation Sans" font-size="22" text-anchor="middle" fill="#000">3</text><ellipse cx="574.3" cy="639.5" rx="15.3" ry="16.4" fill="#fff" stroke="#000" stroke-width="3.4"/><path d="M574.3 657V721" stroke="#000" stroke-width="3"/><polygon points="567.8,720 580.8,720 574.3,732" fill="#000"/><text x="574.3" y="647.5" font-family="Liberation Sans" font-size="22" text-anchor="middle" fill="#000">4</text><ellipse cx="684.3" cy="639.5" rx="15.3" ry="16.4" fill="#fff" stroke="#000" stroke-width="3.4"/><path d="M684.3 657V721" stroke="#000" stroke-width="3"/><polygon points="677.8,720 690.8,720 684.3,732" fill="#000"/><text x="684.3" y="647.5" font-family="Liberation Sans" font-size="22" text-anchor="middle" fill="#000">5</text><ellipse cx="793.8" cy="639.5" rx="15.3" ry="16.4" fill="#fff" stroke="#000" stroke-width="3.4"/><path d="M793.8 657V721" stroke="#000" stroke-width="3"/><polygon points="787.3,720 800.3,720 793.8,732" fill="#000"/><text x="793.8" y="647.5" font-family="Liberation Sans" font-size="22" text-anchor="middle" fill="#000">6</text><path d="M781 817H838" stroke="#000" stroke-width="3.4"/><polygon points="837.5,811.5 849,817 837.5,822.5" fill="#000"/><ellipse cx="764.9" cy="817.2" rx="15.2" ry="17.8" fill="#fff" stroke="#000" stroke-width="3.4"/><text x="765" y="825" font-family="Liberation Sans" font-size="22" text-anchor="middle" fill="#000">7</text></svg>
</body></html>
